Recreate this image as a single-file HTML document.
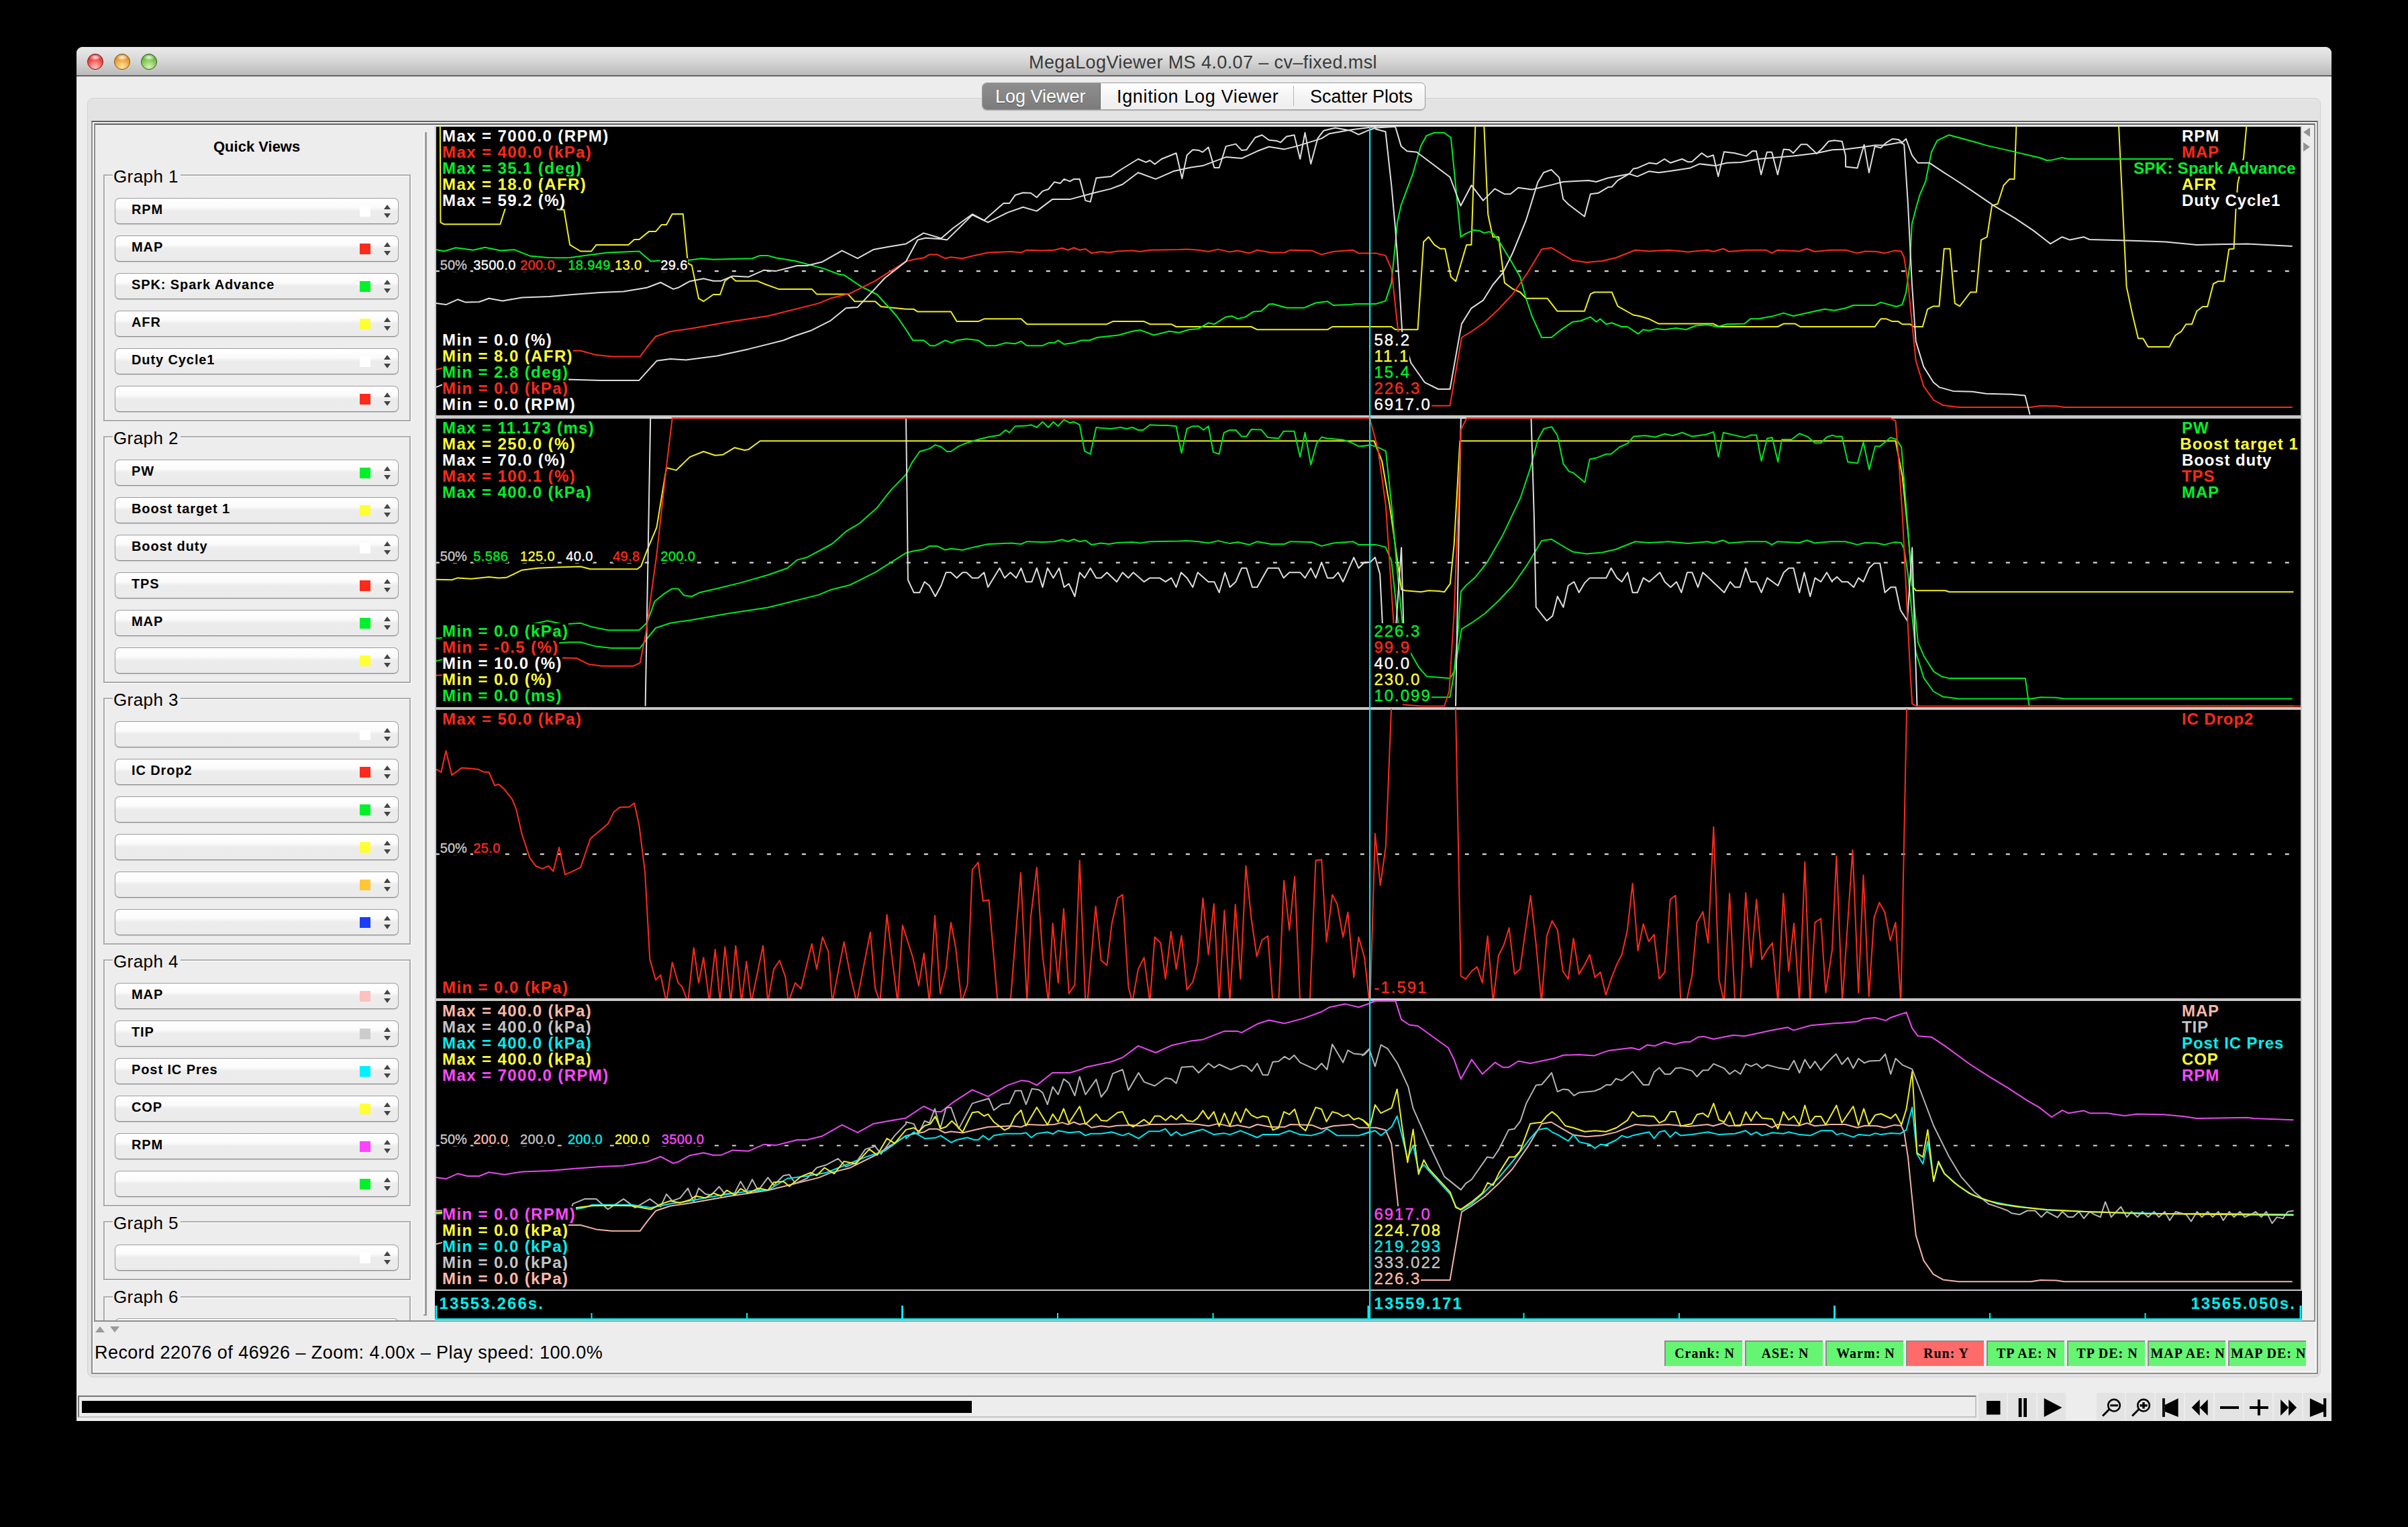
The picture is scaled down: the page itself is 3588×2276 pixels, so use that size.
<!DOCTYPE html><html><head><meta charset="utf-8"><style>
*{margin:0;padding:0;box-sizing:border-box}
html,body{width:3588px;height:2276px;background:#000;overflow:hidden;font-family:"Liberation Sans", sans-serif}
.a{position:absolute}
.t{position:absolute;white-space:pre;line-height:1}
.combo{position:absolute;left:171px;width:423px;height:39px;border:1px solid #9c9c9c;border-bottom-color:#8a8a8a;border-radius:7px;
 background:linear-gradient(#ffffff 0%,#fbfbfb 35%,#ececec 50%,#ebebeb 100%);box-shadow:0 1px 1px rgba(0,0,0,.15)}
.combo .lbl{position:absolute;left:24px;top:6.5px;font-weight:700;font-size:20px;letter-spacing:0.9px;color:#000;white-space:pre;line-height:1}
.combo .sq{position:absolute;left:364px;top:11px;width:16px;height:16px}
.combo .up{position:absolute;left:400px;top:9px;width:0;height:0;border-left:5px solid transparent;border-right:5px solid transparent;border-bottom:7px solid #454545}
.combo .dn{position:absolute;left:400px;top:22px;width:0;height:0;border-left:5px solid transparent;border-right:5px solid transparent;border-top:7px solid #454545}
.grp{position:absolute;left:154px;width:458px;border:2px solid #a9a9a9;border-top-color:#b0b0b0;box-shadow:inset 1px 1px 0 #fff,1px 1px 0 #fff}
.glbl{position:absolute;left:168px;font-size:26px;letter-spacing:0.4px;color:#000;background:#ededed;padding:0 3px 0 1px;white-space:pre;line-height:1}
.ind{position:absolute;top:1998px;width:116px;height:38px;border-top:2px solid #8c8c8c;border-left:2px solid #8c8c8c;font-family:"Liberation Serif", serif;font-weight:700;font-size:20px;letter-spacing:1px;color:#000;display:flex;justify-content:safe center;padding-left:2px;line-height:34px;white-space:pre;overflow:hidden}
.btn{position:absolute;top:2076px;width:42px;height:41px;background:#e3e3e3}
.ct{position:absolute;white-space:pre;line-height:1;font-weight:700;font-size:24px;letter-spacing:1.3px}
.mid{position:absolute;white-space:pre;line-height:1;font-size:20px}
</style></head><body>
<div class="a" style="left:114px;top:70px;width:3360px;height:2048px;background:#ededed;border-radius:9px 9px 0 0;overflow:hidden">
<div class="a" style="left:0;top:0;width:3360px;height:42px;background:linear-gradient(#eaeaea,#d6d6d6 50%,#bababa)"></div>
<div class="a" style="left:0;top:42px;width:3360px;height:2px;background:#636363"></div>
</div>
<div class="a" style="left:130px;top:80px;width:24px;height:24px;border-radius:50%;background:radial-gradient(ellipse 40% 22% at 50% 20%,rgba(255,255,255,.9),rgba(255,255,255,0)),radial-gradient(circle at 50% 85%,#fbc8c4 0%,#f4504c 50%,#c42622 92%);border:1px solid #7a1512"></div>
<div class="a" style="left:170px;top:80px;width:24px;height:24px;border-radius:50%;background:radial-gradient(ellipse 40% 22% at 50% 20%,rgba(255,255,255,.9),rgba(255,255,255,0)),radial-gradient(circle at 50% 85%,#fde7a8 0%,#f0a640 50%,#c87a18 92%);border:1px solid #7d5410"></div>
<div class="a" style="left:210px;top:80px;width:24px;height:24px;border-radius:50%;background:radial-gradient(ellipse 40% 22% at 50% 20%,rgba(255,255,255,.9),rgba(255,255,255,0)),radial-gradient(circle at 50% 85%,#d8f0b8 0%,#86c858 50%,#4a9a2a 92%);border:1px solid #2d5e17"></div>
<div class="t" style="left:1533px;top:80px;font-size:27px;letter-spacing:0.4px;color:#3a3a3a">MegaLogViewer MS 4.0.07 – cv–fixed.msl</div>
<div class="a" style="left:130px;top:146px;width:3328px;height:1907px;background:#e3e3e3;border:1px solid #d0d0d0;border-radius:9px"></div>
<div class="a" style="left:136px;top:180px;width:3318px;height:1868px;background:#ededed;border:2px solid #8d8d8d;border-top-color:#5f5f5f"></div>
<div class="a" style="left:138px;top:182px;width:3314px;height:1864px;border:2px solid #f7f7f7"></div>
<div class="a" style="left:140px;top:184px;width:3310px;height:1786px;border:2px solid #8d8d8d;border-top-color:#5f5f5f"></div>
<div class="a" style="left:1463px;top:123px;width:661px;height:40.5px;border:1px solid #9b9b9b;border-radius:7px;background:linear-gradient(#ffffff,#f4f4f4 50%,#eeeeee);box-shadow:0 1px 1px rgba(0,0,0,.2);overflow:hidden">
<div class="a" style="left:0;top:0;width:176px;height:40px;background:linear-gradient(#8e8e8e,#858585 50%,#7a7a7a);border-right:1px solid #666"></div>
<div class="a" style="left:463px;top:4px;width:1px;height:30px;background:#b5b5b5"></div>
</div>
<div class="t" style="left:1483px;top:131px;font-size:27px;color:#fff;text-shadow:0 1px 0 #555">Log Viewer</div>
<div class="t" style="left:1664px;top:131px;font-size:27px;letter-spacing:0.65px;color:#000">Ignition Log Viewer</div>
<div class="t" style="left:1952px;top:131px;font-size:27px;color:#000">Scatter Plots</div>
<div class="t" style="left:318px;top:207.5px;font-size:22px;font-weight:700;color:#000">Quick Views</div>
<div class="a" style="left:142px;top:186px;width:490px;height:1782px;overflow:hidden">
<div class="grp" style="left:12px;top:74.0px;height:367.5px"></div>
<div class="glbl" style="left:26px;top:64.0px">Graph 1</div>
<div class="combo" style="left:29px;top:108.5px"><div class="lbl">RPM</div><div class="sq" style="background:#ffffff"></div><div class="up"></div><div class="dn"></div></div>
<div class="combo" style="left:29px;top:164.5px"><div class="lbl">MAP</div><div class="sq" style="background:#ff2a1a"></div><div class="up"></div><div class="dn"></div></div>
<div class="combo" style="left:29px;top:220.5px"><div class="lbl">SPK: Spark Advance</div><div class="sq" style="background:#00f02a"></div><div class="up"></div><div class="dn"></div></div>
<div class="combo" style="left:29px;top:276.5px"><div class="lbl">AFR</div><div class="sq" style="background:#ffff33"></div><div class="up"></div><div class="dn"></div></div>
<div class="combo" style="left:29px;top:332.5px"><div class="lbl">Duty Cycle1</div><div class="sq" style="background:#ffffff"></div><div class="up"></div><div class="dn"></div></div>
<div class="combo" style="left:29px;top:388.5px"><div class="lbl"></div><div class="sq" style="background:#ff2a1a"></div><div class="up"></div><div class="dn"></div></div>
<div class="grp" style="left:12px;top:464.0px;height:367.5px"></div>
<div class="glbl" style="left:26px;top:454.0px">Graph 2</div>
<div class="combo" style="left:29px;top:498.5px"><div class="lbl">PW</div><div class="sq" style="background:#00f02a"></div><div class="up"></div><div class="dn"></div></div>
<div class="combo" style="left:29px;top:554.5px"><div class="lbl">Boost target 1</div><div class="sq" style="background:#ffff33"></div><div class="up"></div><div class="dn"></div></div>
<div class="combo" style="left:29px;top:610.5px"><div class="lbl">Boost duty</div><div class="sq" style="background:#ffffff"></div><div class="up"></div><div class="dn"></div></div>
<div class="combo" style="left:29px;top:666.5px"><div class="lbl">TPS</div><div class="sq" style="background:#ff2a1a"></div><div class="up"></div><div class="dn"></div></div>
<div class="combo" style="left:29px;top:722.5px"><div class="lbl">MAP</div><div class="sq" style="background:#00f02a"></div><div class="up"></div><div class="dn"></div></div>
<div class="combo" style="left:29px;top:778.5px"><div class="lbl"></div><div class="sq" style="background:#ffff33"></div><div class="up"></div><div class="dn"></div></div>
<div class="grp" style="left:12px;top:854.0px;height:367.5px"></div>
<div class="glbl" style="left:26px;top:844.0px">Graph 3</div>
<div class="combo" style="left:29px;top:888.5px"><div class="lbl"></div><div class="sq" style="background:#ffffff"></div><div class="up"></div><div class="dn"></div></div>
<div class="combo" style="left:29px;top:944.5px"><div class="lbl">IC Drop2</div><div class="sq" style="background:#ff2a1a"></div><div class="up"></div><div class="dn"></div></div>
<div class="combo" style="left:29px;top:1000.5px"><div class="lbl"></div><div class="sq" style="background:#00f02a"></div><div class="up"></div><div class="dn"></div></div>
<div class="combo" style="left:29px;top:1056.5px"><div class="lbl"></div><div class="sq" style="background:#ffff33"></div><div class="up"></div><div class="dn"></div></div>
<div class="combo" style="left:29px;top:1112.5px"><div class="lbl"></div><div class="sq" style="background:#ffc833"></div><div class="up"></div><div class="dn"></div></div>
<div class="combo" style="left:29px;top:1168.5px"><div class="lbl"></div><div class="sq" style="background:#1a3cff"></div><div class="up"></div><div class="dn"></div></div>
<div class="grp" style="left:12px;top:1244.0px;height:367.5px"></div>
<div class="glbl" style="left:26px;top:1234.0px">Graph 4</div>
<div class="combo" style="left:29px;top:1278.5px"><div class="lbl">MAP</div><div class="sq" style="background:#ffc0c0"></div><div class="up"></div><div class="dn"></div></div>
<div class="combo" style="left:29px;top:1334.5px"><div class="lbl">TIP</div><div class="sq" style="background:#cccccc"></div><div class="up"></div><div class="dn"></div></div>
<div class="combo" style="left:29px;top:1390.5px"><div class="lbl">Post IC Pres</div><div class="sq" style="background:#00f0ff"></div><div class="up"></div><div class="dn"></div></div>
<div class="combo" style="left:29px;top:1446.5px"><div class="lbl">COP</div><div class="sq" style="background:#ffff33"></div><div class="up"></div><div class="dn"></div></div>
<div class="combo" style="left:29px;top:1502.5px"><div class="lbl">RPM</div><div class="sq" style="background:#ff44ff"></div><div class="up"></div><div class="dn"></div></div>
<div class="combo" style="left:29px;top:1558.5px"><div class="lbl"></div><div class="sq" style="background:#00f02a"></div><div class="up"></div><div class="dn"></div></div>
<div class="grp" style="left:12px;top:1634.0px;height:87.5px"></div>
<div class="glbl" style="left:26px;top:1624.0px">Graph 5</div>
<div class="combo" style="left:29px;top:1668.5px"><div class="lbl"></div><div class="sq" style="background:#ffffff"></div><div class="up"></div><div class="dn"></div></div>
<div class="grp" style="left:12px;top:1745.5px;height:200px"></div>
<div class="glbl" style="left:26px;top:1734.0px">Graph 6</div>
<div class="combo" style="left:29px;top:1778.5px"></div>
</div>
<div class="a" style="left:631px;top:197px;width:2px;height:1762px;background:#fafafa"></div>
<div class="a" style="left:633px;top:197px;width:3px;height:1764px;background:#9a9a9a"></div>
<div class="a" style="left:631px;top:1959px;width:5px;height:2px;background:#9a9a9a"></div>
<div class="a" style="left:142px;top:1977px;width:0;height:0;border-left:7px solid transparent;border-right:7px solid transparent;border-bottom:9px solid #9a9a9a"></div>
<div class="a" style="left:164px;top:1977px;width:0;height:0;border-left:7px solid transparent;border-right:7px solid transparent;border-top:9px solid #9a9a9a"></div>
<div class="a" style="left:3432px;top:190px;width:0;height:0;border-top:7px solid transparent;border-bottom:7px solid transparent;border-right:10px solid #939393"></div>
<div class="a" style="left:3432px;top:212px;width:0;height:0;border-top:7px solid transparent;border-bottom:7px solid transparent;border-left:10px solid #939393"></div>
<div class="a" style="left:648px;top:188px;width:2782px;height:1781px;background:#c8c8c8"></div>
<div class="a" style="left:650px;top:189px;width:2778px;height:430px;background:#000"></div>
<div class="a" style="left:650px;top:623.5px;width:2778px;height:430px;background:#000"></div>
<div class="a" style="left:650px;top:1058px;width:2778px;height:430px;background:#000"></div>
<div class="a" style="left:650px;top:1492.3px;width:2778px;height:430px;background:#000"></div>
<div class="a" style="left:648px;top:1924px;width:2782px;height:44px;background:#000"></div>
<div class="a" style="left:648px;top:1965px;width:2782px;height:3px;background:#00f0f0"></div>
<div class="t" style="left:141px;top:2003px;font-size:27px;letter-spacing:0.44px;color:#000">Record 22076 of 46926 – Zoom: 4.00x – Play speed: 100.0%</div>
<div class="ind" style="left:2480px;background:#66f573">Crank: N</div>
<div class="ind" style="left:2600px;background:#66f573">ASE: N</div>
<div class="ind" style="left:2720px;background:#66f573">Warm: N</div>
<div class="ind" style="left:2840px;background:#ff6a6a">Run: Y</div>
<div class="ind" style="left:2960px;background:#66f573">TP AE: N</div>
<div class="ind" style="left:3080px;background:#66f573">TP DE: N</div>
<div class="ind" style="left:3200px;background:#66f573">MAP AE: N</div>
<div class="ind" style="left:3320px;background:#66f573">MAP DE: N</div>
<div class="a" style="left:116px;top:2080px;width:2829px;height:33px;background:#ededed;border:2px solid #c4c4c4;border-top-color:#767676;border-left-color:#767676"></div>
<div class="a" style="left:122px;top:2088px;width:1326px;height:18px;background:#000"></div>
<div class="btn" style="left:2948px"></div>
<div class="btn" style="left:2992px"></div>
<div class="btn" style="left:3036px"></div>
<div class="btn" style="left:3124px"></div>
<div class="btn" style="left:3168px"></div>
<div class="btn" style="left:3212px"></div>
<div class="btn" style="left:3256px"></div>
<div class="btn" style="left:3300px"></div>
<div class="btn" style="left:3344px"></div>
<div class="btn" style="left:3388px"></div>
<div class="btn" style="left:3432px"></div>
<svg class="a" style="left:0;top:0" width="3588" height="2276" fill="#000"><rect x="2960" y="2088" width="20.5" height="20.5"/><rect x="3007.7" y="2084" width="4.8" height="28"/><rect x="3015.2" y="2084" width="4.8" height="28"/><polygon points="3045.7,2084 3072.5,2098 3045.7,2112"/><circle cx="3150" cy="2094.7" r="8.8" fill="none" stroke="#000" stroke-width="2.6"/><rect x="3144.3" y="2093.3" width="11.6" height="3"/><line x1="3133" y1="2110.5" x2="3143.5" y2="2100" stroke="#000" stroke-width="3"/><circle cx="3194" cy="2094.7" r="8.8" fill="none" stroke="#000" stroke-width="2.6"/><rect x="3188.4" y="2093.2" width="11.2" height="3.4"/><rect x="3192.3" y="2090" width="3.4" height="9.6"/><line x1="3177" y1="2110.5" x2="3187.5" y2="2100" stroke="#000" stroke-width="3"/><rect x="3222" y="2084.2" width="3.8" height="27.7"/><polygon points="3225.8,2094.1 3245.6,2084.2 3245.6,2111.9 3225.8,2103.9"/><polygon points="3265.7,2098 3277.7,2086 3277.7,2110"/><polygon points="3277.7,2098 3289.7,2086 3289.7,2110"/><rect x="3308" y="2096" width="28" height="4"/><rect x="3352" y="2096" width="27.8" height="4"/><rect x="3363.9" y="2086" width="4" height="23.6"/><polygon points="3398.1,2086 3410.1,2098 3398.1,2110"/><polygon points="3410.1,2086 3422.1,2098 3410.1,2110"/><polygon points="3441.9,2084.2 3462.2,2094.1 3462.2,2103.9 3441.9,2111.9"/><rect x="3462" y="2084.2" width="4.2" height="27.7"/></svg>
<svg class="a" style="left:0;top:0" width="3588" height="2276" viewBox="0 0 3588 2276">
<defs>
<clipPath id="cp0"><rect x="650" y="187.5" width="2778" height="431.5"/></clipPath>
<clipPath id="cp1"><rect x="650" y="622.0" width="2778" height="431.5"/></clipPath>
<clipPath id="cp2"><rect x="650" y="1056.5" width="2778" height="431.5"/></clipPath>
<clipPath id="cp3"><rect x="650" y="1490.8" width="2778" height="431.5"/></clipPath>
</defs>
<g clip-path="url(#cp0)">
<line x1="648.8" y1="404.2" x2="3411" y2="404.2" stroke="#d8d8d8" stroke-width="2.2" stroke-dasharray="6 20"/>
<polyline fill="none" stroke="#eeee22" stroke-width="2.0" stroke-linejoin="round" points="655.8,187.5 656.4,331.4 661.6,334.3 745.3,334.3 753.2,309.6 760.5,305.3 824.4,305.3 831.7,312.5 840.4,312.5 849.1,364.9 865.1,374.5 881.1,374.5 888.4,364.9 936.3,364.9 945.1,357.0 952.3,357.0 966.9,345.1 977.0,345.1 985.8,334.9 993.0,334.9 1001.7,318.9 1017.7,318.9 1025.0,392.5 1030.8,395.4 1041.0,444.8 1048.3,449.2 1062.8,439.0 1073.0,439.0 1080.2,418.7 1089.0,412.3 1096.2,418.7 1128.2,418.7 1138.4,423.0 1160.2,430.9 1209.6,430.9 1216.9,438.4 1263.4,438.4 1273.5,449.2 1304.1,449.2 1312.8,457.0 1350.0,460.8 1361.6,460.8 1367.4,464.6 1416.9,464.6 1425.6,479.1 1457.6,479.1 1466.3,475.3 1521.5,475.3 1530.2,483.2 1649.4,483.2 1658.1,479.1 1704.7,479.1 1713.4,483.2 1745.3,483.2 1752.6,487.0 1864.5,487.0 1873.3,491.3 1977.9,491.3 1985.2,487.0 2050.0,487.0 2073.3,487.0 2079.1,491.3 2112.5,491.3 2121.2,360.5 2128.5,353.2 2137.2,364.9 2145.9,370.7 2153.2,370.7 2161.9,412.8 2169.2,419.2 2185.2,364.9 2192.4,364.9 2198.3,187.5 2205.5,186.1 2211.3,187.5 2217.2,319.8 2224.4,353.2 2233.1,353.2 2241.9,421.6 2253.5,430.3 2265.1,435.5 2273.8,444.8 2305.8,444.8 2320.3,463.7 2361.0,463.7 2369.8,438.4 2375.6,435.5 2401.7,435.5 2410.5,456.4 2433.7,469.5 2442.4,471.0 2457.0,475.3 2471.5,482.6 2552.9,482.6 2561.6,487.0 2648.8,487.0 2657.6,482.6 2675.0,482.6 2682.3,487.0 2750.0,487.0 2793.6,487.0 2802.3,475.3 2811.0,475.3 2819.8,479.1 2828.5,479.1 2834.3,483.2 2845.9,483.2 2851.7,487.0 2864.8,487.0 2872.1,460.8 2880.8,456.4 2889.5,456.4 2896.8,370.7 2905.5,370.7 2912.8,452.1 2920.1,456.4 2936.0,435.5 2944.8,435.5 2952.0,357.6 2960.8,353.2 2968.0,306.7 2976.7,303.8 2985.5,276.2 2994.2,266.9 3001.5,266.9 3004.4,187.5 3005.8,186.1 3155.5,186.1 3157.0,187.5 3168.6,427.4 3177.3,468.1 3186.0,504.4 3193.3,504.4 3200.6,516.9 3232.6,516.9 3241.3,500.0 3250.0,494.2 3257.3,483.2 3266.0,483.2 3273.3,463.7 3282.0,457.0 3289.2,457.0 3298.0,423.0 3305.2,419.2 3314.0,419.2 3321.2,371.6 3328.5,370.7 3331.4,314.0 3334.3,273.3 3343.0,235.5 3347.4,187.5 3348.8,186.1"/>
<polyline fill="none" stroke="#00ee22" stroke-width="2.0" stroke-linejoin="round" points="650.0,372.1 661.6,374.5 679.1,369.2 705.2,372.7 722.7,368.7 745.9,373.6 766.3,372.1 789.5,381.4 818.6,384.3 847.7,384.3 870.9,380.9 905.8,376.5 952.3,374.5 969.8,389.6 987.2,388.1 1025.0,388.1 1045.3,385.2 1062.8,386.7 1120.9,385.2 1132.6,380.9 1144.2,380.9 1155.8,384.3 1184.9,389.0 1228.5,400.6 1248.8,408.5 1257.6,409.9 1283.7,427.4 1307.0,439.0 1336.0,471.0 1350.0,491.3 1360.2,507.3 1376.2,507.3 1386.3,515.2 1393.6,515.2 1408.1,507.3 1418.3,511.1 1425.6,507.3 1440.1,505.3 1457.6,507.3 1469.2,515.2 1483.7,515.2 1498.3,511.1 1512.8,512.3 1521.5,508.8 1530.2,515.2 1553.5,515.2 1562.2,511.1 1570.9,511.1 1576.7,507.3 1585.5,513.1 1600.0,511.1 1611.6,507.3 1623.3,507.3 1634.9,503.0 1666.9,499.5 1687.2,493.7 1698.8,491.9 1719.2,499.5 1742.4,493.7 1757.0,495.7 1771.5,491.3 1786.0,489.9 1800.6,481.2 1809.3,483.2 1826.7,472.4 1835.5,471.0 1844.2,475.3 1855.8,472.4 1867.4,464.6 1879.1,463.7 1890.7,453.5 1896.5,453.0 1916.9,458.8 1943.0,458.8 1960.5,451.5 1977.9,449.2 1986.6,455.0 2012.8,454.1 2018.6,453.0 2050.0,453.0 2064.5,448.6 2073.3,421.6 2079.1,363.4 2082.0,331.4 2087.8,305.3 2105.2,258.8 2116.9,218.1 2125.6,202.1 2137.2,197.7 2151.7,197.7 2161.9,205.0 2176.5,353.2 2183.7,348.3 2195.3,343.1 2204.1,343.7 2211.3,347.4 2218.6,345.4 2224.4,347.4 2236.0,363.4 2253.5,392.5 2265.1,412.8 2273.8,444.8 2282.6,471.0 2297.1,503.0 2311.6,503.0 2326.2,491.3 2343.6,479.7 2355.2,478.2 2369.8,472.4 2378.5,479.7 2384.3,475.3 2393.0,483.2 2401.7,481.2 2416.3,487.0 2425.0,487.0 2441.0,497.7 2448.3,491.3 2457.0,492.8 2468.6,489.9 2480.2,491.3 2497.7,489.0 2512.2,491.3 2526.7,485.5 2544.2,484.1 2558.7,487.0 2573.3,483.2 2599.4,482.6 2608.1,475.3 2619.8,475.3 2640.1,471.6 2657.6,466.6 2672.1,471.0 2692.4,466.6 2718.6,460.8 2733.1,462.8 2750.0,459.3 2761.6,455.0 2793.6,455.0 2802.3,450.6 2825.6,457.0 2834.3,454.1 2840.1,436.1 2845.9,392.5 2848.8,334.3 2854.7,311.1 2860.5,290.7 2869.2,270.4 2877.9,226.8 2886.6,209.3 2904.1,201.2 2944.8,212.3 2959.3,216.6 2991.3,223.9 3040.7,235.5 3049.4,239.0 3058.1,238.4 3072.7,234.9 3081.4,237.0 3238.4,237.0"/>
<polyline fill="none" stroke="#ff2a1a" stroke-width="2.0" stroke-linejoin="round" points="650.0,550.9 667.4,546.6 766.3,529.1 847.7,522.7 865.1,522.7 888.4,529.1 911.6,531.4 953.8,531.4 964.0,517.5 977.0,501.5 998.8,494.2 1027.9,489.9 1086.0,479.7 1144.2,471.0 1219.8,452.1 1237.2,444.8 1266.3,437.5 1304.1,418.7 1350.0,389.6 1361.6,386.7 1376.2,384.3 1384.9,379.4 1396.5,379.4 1408.1,385.2 1416.9,383.2 1434.3,385.2 1451.7,380.9 1472.1,376.5 1507.0,375.0 1521.5,376.5 1530.2,372.7 1553.5,373.6 1570.9,372.7 1582.6,369.8 1591.3,372.7 1600.0,369.2 1608.7,372.7 1617.4,371.0 1626.2,377.4 1640.7,375.0 1652.3,376.5 1664.0,374.5 1687.2,373.6 1698.8,375.0 1713.4,372.7 1757.0,372.1 1768.6,371.6 1786.0,372.7 1800.6,375.0 1815.1,371.6 1832.6,375.6 1844.2,373.6 1861.6,377.4 1873.3,372.7 1893.6,376.5 1914.0,376.5 1922.7,372.7 1954.7,373.6 1969.2,379.4 1986.6,375.0 2015.7,372.7 2024.4,377.4 2050.0,377.4 2064.5,380.9 2073.3,401.2 2083.4,495.7 2096.5,604.7 2160.5,604.7 2177.9,503.0 2192.4,494.2 2212.8,479.7 2233.1,460.8 2253.5,439.0 2276.7,405.6 2297.1,371.6 2311.6,369.2 2326.2,378.0 2343.6,388.1 2364.0,391.0 2387.2,389.0 2407.6,384.3 2436.6,372.7 2457.0,374.5 2486.0,372.7 2515.1,375.6 2544.2,372.7 2552.9,375.0 2567.4,370.7 2576.2,375.0 2602.3,372.7 2631.4,372.7 2640.1,377.4 2648.8,372.7 2680.8,374.5 2692.4,370.7 2704.1,375.0 2727.3,372.7 2750.0,372.7 2767.4,377.4 2779.1,374.5 2796.5,375.0 2808.1,377.4 2822.7,373.6 2832.8,374.5 2837.2,383.8 2843.0,421.6 2848.8,479.7 2854.7,537.8 2866.3,575.6 2880.8,596.0 2895.3,604.1 2918.6,607.0 3026.2,607.0 3040.7,604.7 3064.0,605.3 3075.6,607.0 3415.7,607.0"/>
<polyline fill="none" stroke="#dedede" stroke-width="2.0" stroke-linejoin="round" points="650.0,577.1 667.4,569.8 766.3,566.9 843.3,565.5 894.2,566.9 952.3,566.9 964.0,553.8 978.5,537.8 998.8,534.9 1022.1,536.4 1068.6,530.6 1115.1,520.4 1167.4,507.3 1182.0,501.5 1208.1,492.8 1237.2,478.2 1260.5,459.3 1277.9,457.9 1298.3,436.1 1318.6,414.3 1350.0,389.6 1367.4,357.6 1379.1,354.7 1402.3,356.2 1411.0,357.6 1448.8,320.4 1472.1,331.4 1501.2,316.9 1524.4,308.8 1544.8,314.6 1568.0,297.1 1594.2,297.1 1629.1,287.8 1655.2,281.4 1672.7,274.8 1695.9,257.3 1722.1,266.9 1748.3,255.3 1774.4,249.5 1791.9,247.1 1826.7,234.1 1850.0,236.1 1873.3,225.3 1890.7,218.7 1914.0,222.4 1931.4,218.1 1969.2,206.4 1980.8,199.2 2012.8,193.4 2050.0,188.8 2050.0,192.5 2064.5,196.3 2073.3,276.2 2079.1,340.2 2084.9,421.6 2089.2,494.2 2102.3,540.7 2122.7,569.8 2143.0,580.0 2160.5,580.0 2172.1,514.6 2177.9,482.6 2192.4,459.3 2209.9,447.7 2224.4,424.5 2239.0,407.0 2253.5,378.0 2273.8,328.5 2291.3,271.8 2300.0,257.3 2311.6,253.0 2323.3,264.6 2329.1,296.6 2337.8,305.3 2361.0,322.7 2369.8,289.3 2381.4,287.8 2395.9,279.1 2401.7,278.5 2410.5,268.9 2427.9,258.8 2433.7,251.5 2439.5,250.6 2457.0,242.8 2468.6,244.2 2480.2,237.0 2489.0,242.8 2506.4,237.0 2515.1,241.3 2520.9,241.3 2535.5,228.2 2544.2,234.1 2552.9,231.2 2560.2,263.1 2568.9,226.2 2584.9,228.2 2602.3,232.6 2611.0,225.3 2616.9,225.3 2624.1,260.2 2632.8,226.8 2640.1,226.8 2648.8,260.2 2657.6,222.4 2666.3,223.3 2672.1,228.2 2683.7,215.2 2692.4,215.2 2707.0,229.1 2715.7,221.0 2724.4,210.8 2733.1,209.3 2744.8,210.8 2750.0,232.6 2750.0,248.6 2767.4,250.6 2777.6,215.7 2784.9,257.3 2793.6,218.1 2802.3,220.4 2811.0,212.3 2819.8,207.0 2828.5,207.9 2834.3,212.3 2840.1,207.0 2848.8,231.2 2857.6,242.8 2875.0,242.8 2895.3,256.4 2912.8,267.5 2939.0,284.9 2970.9,306.7 3002.9,325.6 3029.1,343.1 3055.2,363.4 3072.7,353.2 3084.3,357.6 3104.7,353.2 3113.4,357.0 3186.0,359.1 3226.7,360.5 3273.3,364.9 3348.8,363.4 3415.7,366.9"/>
<polyline fill="none" stroke="#dedede" stroke-width="2.0" stroke-linejoin="round" points="650.0,452.1 664.5,454.1 682.0,446.3 693.6,450.6 714.0,450.0 728.5,444.8 748.8,448.6 777.9,443.4 818.6,441.9 853.5,439.0 894.2,436.1 929.1,434.6 964.0,428.8 984.3,421.0 1003.2,430.9 1010.5,428.8 1027.9,419.2 1048.3,415.2 1062.8,418.7 1074.4,418.7 1091.9,411.4 1115.1,412.8 1138.4,402.7 1155.8,404.1 1173.3,399.8 1187.8,396.0 1202.3,396.0 1225.6,390.2 1254.7,373.6 1277.9,385.2 1301.2,372.1 1324.4,367.8 1350.0,363.4 1376.2,347.4 1402.3,355.3 1419.8,340.2 1448.8,319.2 1466.3,328.5 1495.3,303.0 1504.1,303.0 1512.8,290.7 1524.4,287.3 1536.0,287.8 1544.8,294.2 1553.5,284.9 1562.2,282.0 1570.9,271.3 1579.7,273.3 1585.5,266.9 1594.2,270.4 1600.0,266.9 1608.7,266.9 1617.4,298.9 1624.7,300.9 1633.4,265.2 1655.2,263.1 1669.8,253.0 1695.9,237.0 1707.6,241.9 1713.4,239.0 1720.6,244.8 1730.8,237.0 1752.6,228.2 1761.3,266.0 1768.6,231.2 1777.3,223.3 1786.0,223.9 1791.9,226.8 1800.6,219.5 1809.3,250.0 1816.6,250.0 1826.7,218.1 1841.3,214.6 1850.0,223.9 1857.3,223.3 1870.3,205.0 1880.5,201.2 1890.7,208.8 1902.3,209.9 1908.1,212.3 1916.9,203.5 1928.5,201.2 1937.2,237.0 1944.5,197.7 1953.2,244.2 1963.4,206.4 1972.1,194.8 1989.5,190.5 2012.8,194.8 2024.4,200.6 2039.0,194.2 2050.0,190.5 2079.1,188.8 2087.8,218.1 2096.5,225.3 2111.0,226.8 2160.5,264.0 2176.5,306.7 2192.4,276.2 2209.9,298.9 2227.3,281.4 2241.9,289.3 2250.6,289.3 2262.2,279.7 2282.6,282.6 2311.6,275.6 2329.1,271.0 2366.9,268.9 2378.5,271.0 2395.9,265.2 2427.9,259.3 2439.5,263.1 2457.0,255.3 2471.5,257.3 2491.9,254.4 2518.0,250.6 2532.6,244.2 2555.8,247.1 2573.3,242.8 2593.6,241.9 2619.8,237.0 2672.1,232.6 2707.0,228.2 2730.2,223.3 2750.0,222.4 2773.3,219.5 2793.6,216.6 2808.1,216.6 2831.4,212.3 2837.2,215.2 2843.0,305.3 2848.8,421.6 2854.7,508.8 2866.3,546.6 2880.8,569.8 2889.5,577.1 2909.9,582.9 2939.0,583.8 2959.3,586.7 2997.1,587.8 3017.4,589.6 3024.7,618.0"/>
</g>
<g clip-path="url(#cp1)">
<line x1="648.8" y1="838.7" x2="3411" y2="838.7" stroke="#d8d8d8" stroke-width="2.2" stroke-dasharray="6 20"/>
<polyline fill="none" stroke="#00e622" stroke-width="2.0" stroke-linejoin="round" points="650.0,985.4 667.4,981.1 766.3,963.6 847.7,957.2 865.1,957.2 888.4,963.6 911.6,965.9 953.8,965.9 964.0,952.0 977.0,936.0 998.8,928.7 1027.9,924.4 1086.0,914.2 1144.2,905.5 1219.8,886.6 1237.2,879.3 1266.3,872.0 1304.1,853.2 1350.0,824.1 1361.6,821.2 1376.2,818.8 1384.9,813.9 1396.5,813.9 1408.1,819.7 1416.9,817.7 1434.3,819.7 1451.7,815.4 1472.1,811.0 1507.0,809.5 1521.5,811.0 1530.2,807.2 1553.5,808.1 1570.9,807.2 1582.6,804.3 1591.3,807.2 1600.0,803.7 1608.7,807.2 1617.4,805.5 1626.2,811.9 1640.7,809.5 1652.3,811.0 1664.0,809.0 1687.2,808.1 1698.8,809.5 1713.4,807.2 1757.0,806.6 1768.6,806.1 1786.0,807.2 1800.6,809.5 1815.1,806.1 1832.6,810.1 1844.2,808.1 1861.6,811.9 1873.3,807.2 1893.6,811.0 1914.0,811.0 1922.7,807.2 1954.7,808.1 1969.2,813.9 1986.6,809.5 2015.7,807.2 2024.4,811.9 2050.0,811.9 2064.5,815.4 2073.3,835.7 2083.4,930.2 2096.5,1039.2 2160.5,1039.2 2177.9,937.5 2192.4,928.7 2212.8,914.2 2233.1,895.3 2253.5,873.5 2276.7,840.1 2297.1,806.1 2311.6,803.7 2326.2,812.5 2343.6,822.6 2364.0,825.5 2387.2,823.5 2407.6,818.8 2436.6,807.2 2457.0,809.0 2486.0,807.2 2515.1,810.1 2544.2,807.2 2552.9,809.5 2567.4,805.2 2576.2,809.5 2602.3,807.2 2631.4,807.2 2640.1,811.9 2648.8,807.2 2680.8,809.0 2692.4,805.2 2704.1,809.5 2727.3,807.2 2750.0,807.2 2767.4,811.9 2779.1,809.0 2796.5,809.5 2808.1,811.9 2822.7,808.1 2832.8,809.0 2837.2,818.3 2843.0,856.1 2848.8,914.2 2854.7,972.3 2866.3,1010.1 2880.8,1030.5 2895.3,1038.6 2918.6,1041.5 3026.2,1041.5 3040.7,1039.2 3064.0,1039.8 3075.6,1041.5 3415.7,1041.5"/>
<polyline fill="none" stroke="#eeee22" stroke-width="2.0" stroke-linejoin="round" points="650.0,863.7 673.3,864.3 682.0,861.4 702.3,862.8 728.5,859.9 743.0,861.4 754.7,860.8 777.9,849.7 801.2,846.8 830.2,845.4 865.1,844.5 879.7,848.3 949.4,848.3 955.2,843.9 964.0,820.7 978.5,785.8 993.0,697.1 1007.6,700.9 1027.9,681.1 1048.3,673.0 1065.7,678.8 1077.3,677.7 1094.8,667.2 1109.3,671.0 1115.1,670.1 1132.6,657.3 1350.0,657.3 2047.4,657.3 2059.1,687.0 2070.7,753.8 2080.9,826.5 2088.1,878.8 2094.0,880.3 2117.2,882.3 2128.8,880.3 2143.4,881.1 2152.1,882.3 2160.8,870.1 2166.6,812.0 2172.4,710.2 2175.3,657.3 2730.0,657.3 2824.5,657.3 2834.7,710.2 2843.4,797.4 2849.2,873.0 2855.0,880.3 2898.6,880.3 2904.4,882.3 3417.5,882.3"/>
<polyline fill="none" stroke="#00e622" stroke-width="2.0" stroke-linejoin="round" points="650.0,951.5 737.2,942.8 815.7,925.3 839.0,930.6 865.1,928.8 882.6,934.6 905.8,939.3 952.3,939.3 964.0,928.2 975.6,896.3 990.1,884.6 1001.7,877.4 1010.5,877.4 1019.2,887.5 1030.8,889.0 1042.4,883.2 1071.5,876.5 1103.5,868.6 1144.2,857.0 1173.3,846.8 1187.8,834.6 1202.3,830.8 1240.1,810.5 1260.5,792.2 1280.8,780.0 1307.0,756.7 1327.3,730.6 1350.0,707.3 1358.7,689.9 1370.3,673.0 1384.9,668.9 1393.6,663.1 1402.3,666.0 1411.0,673.0 1416.9,673.0 1428.5,665.2 1437.2,661.4 1445.9,658.5 1457.6,655.0 1472.1,651.5 1489.5,648.6 1498.3,641.0 1504.1,644.8 1512.8,635.2 1530.2,634.6 1536.0,633.2 1544.8,637.0 1553.5,628.8 1562.2,637.0 1569.5,628.8 1576.7,635.2 1585.5,625.3 1594.2,630.3 1600.0,628.8 1608.7,633.2 1616.0,672.4 1624.7,676.8 1633.4,637.0 1640.7,638.1 1655.2,639.0 1669.8,637.0 1678.5,639.0 1687.2,637.0 1695.9,641.0 1703.2,641.0 1713.4,633.2 1727.9,634.0 1739.5,634.0 1752.6,635.2 1760.5,675.3 1768.6,639.0 1777.3,635.2 1786.0,635.2 1793.3,641.0 1800.6,635.2 1807.8,673.9 1816.6,676.8 1823.8,644.8 1832.6,641.0 1841.3,641.0 1850.0,650.6 1857.3,650.6 1864.5,639.9 1879.1,640.4 1889.2,652.1 1905.2,653.5 1912.5,642.8 1928.5,642.8 1937.2,681.1 1944.5,644.8 1953.2,692.8 1961.9,660.8 1969.2,651.5 1977.9,653.5 2001.2,655.6 2012.8,659.3 2024.4,665.2 2039.0,663.7 2030.0,665.2 2041.6,663.1 2053.3,666.6 2064.9,672.4 2073.6,753.8 2082.3,855.6 2092.5,957.3 2102.7,974.7 2114.3,995.1 2125.9,1008.2 2160.8,1011.1 2166.6,1000.9 2172.4,942.8 2176.8,881.7 2184.1,873.0 2198.6,859.9 2216.0,838.1 2239.3,797.4 2265.5,742.2 2280.0,698.6 2291.6,655.0 2300.3,639.0 2312.0,636.1 2320.7,649.2 2329.4,691.3 2338.1,702.9 2344.0,704.4 2361.4,718.9 2368.7,684.6 2378.8,682.6 2393.4,676.8 2400.6,676.8 2413.7,666.0 2425.3,660.8 2434.1,650.6 2451.5,649.2 2466.0,651.5 2480.6,646.8 2492.2,649.2 2506.7,644.8 2521.3,650.6 2541.6,647.7 2553.3,643.9 2560.5,681.1 2567.8,644.8 2599.8,652.1 2608.5,648.6 2617.2,648.6 2624.5,687.0 2633.2,653.5 2640.5,652.1 2649.2,688.4 2655.0,655.0 2669.5,655.0 2681.2,646.3 2692.8,650.6 2704.4,660.2 2713.1,660.2 2721.9,651.5 2730.0,648.6 2735.8,650.6 2744.5,650.6 2753.3,688.4 2767.8,690.4 2776.5,659.3 2785.2,700.0 2794.0,665.2 2801.2,665.2 2817.2,652.1 2825.9,655.0 2833.2,666.6 2839.0,739.3 2844.8,812.0 2850.6,884.6 2857.9,957.3 2866.6,977.7 2881.2,1000.9 2892.8,1008.2 2904.4,1011.1 3017.8,1011.1 3023.6,1052.5 3417.5,1052.5"/>
<polyline fill="none" stroke="#dedede" stroke-width="2.0" stroke-linejoin="round" points="961.6,1052.5 969.2,623.3 1350.0,623.3 1350.0,623.3 1351.5,739.3 1352.9,864.3 1361.6,883.2 1370.3,883.2 1377.6,867.2 1384.9,873.0 1393.6,889.0 1402.3,873.0 1409.6,853.2 1416.9,853.2 1425.6,861.4 1434.3,853.2 1440.1,853.2 1448.8,861.4 1457.6,861.4 1466.3,853.2 1472.1,875.3 1489.5,846.8 1496.8,861.4 1505.5,853.2 1514.2,861.4 1521.5,846.8 1528.8,867.2 1537.5,867.2 1544.8,846.8 1553.5,875.3 1560.8,846.8 1569.5,861.4 1578.2,846.8 1585.5,875.3 1592.7,870.1 1601.5,889.0 1608.7,853.2 1616.0,861.4 1624.7,846.8 1633.4,861.4 1640.7,861.4 1649.4,853.2 1664.0,867.2 1672.7,853.2 1681.4,861.4 1688.7,853.2 1704.7,867.2 1713.4,861.4 1727.9,861.4 1736.6,867.2 1745.3,861.4 1752.6,875.3 1759.9,853.2 1768.6,861.4 1777.3,875.3 1784.6,853.2 1800.6,867.2 1809.3,867.2 1816.6,883.2 1825.3,853.2 1832.6,875.3 1841.3,867.2 1850.0,846.8 1857.3,846.8 1866.0,875.3 1873.3,875.3 1889.2,846.8 1905.2,846.8 1912.5,861.4 1921.2,853.2 1937.2,853.2 1944.5,861.4 1953.2,846.8 1960.5,861.4 1969.2,838.1 1977.9,861.4 1986.6,861.4 1993.9,853.2 2001.2,867.2 2017.2,830.8 2024.4,846.8 2033.1,838.1 2040.4,838.1 2030.0,839.6 2041.6,838.1 2048.9,830.8 2056.2,855.6 2060.5,942.8"/><polyline fill="none" stroke="#dedede" stroke-width="2.0" stroke-linejoin="round" points="2079.4,942.8 2088.1,816.3 2091.6,942.8"/><polyline fill="none" stroke="#dedede" stroke-width="2.0" stroke-linejoin="round" points="2169.0,1052.5 2176.8,623.3 2281.5,623.3 2285.8,768.3 2288.7,905.0 2304.7,925.3 2313.4,918.1 2320.7,889.0 2329.4,905.0 2336.7,873.0 2345.4,867.2 2352.7,883.2 2361.4,868.6 2368.7,861.4 2393.4,861.4 2400.6,846.8 2409.4,861.4 2416.6,867.2 2425.3,853.2 2432.6,883.2 2439.9,883.2 2448.6,861.4 2457.3,867.2 2473.3,853.2 2480.6,867.2 2489.3,875.3 2498.0,867.2 2505.3,883.2 2514.0,853.2 2521.3,853.2 2530.0,875.3 2537.3,853.2 2569.2,883.2 2578.0,867.2 2585.2,875.3 2592.5,875.3 2601.2,846.8 2608.5,867.2 2617.2,867.2 2624.5,883.2 2633.2,861.4 2649.2,873.0 2657.9,853.2 2665.2,846.8 2672.4,846.8 2681.2,883.2 2688.4,853.2 2697.2,889.0 2704.4,861.4 2713.1,867.2 2721.9,853.2 2730.0,867.2 2730.0,865.7 2737.3,859.9 2744.5,867.2 2753.3,867.2 2762.0,875.3 2769.2,861.4 2776.5,867.2 2785.2,846.8 2792.5,839.6 2801.2,839.6 2808.5,883.2 2817.2,875.3 2824.5,875.3 2831.7,909.3 2841.9,925.3 2849.2,816.3 2852.1,913.7 2856.5,1052.5"/>
<polyline fill="none" stroke="#ff2a1a" stroke-width="2.0" stroke-linejoin="round" points="650.0,1006.7 737.2,1000.9 836.0,980.6 859.3,981.1 876.7,989.9 897.1,992.8 943.6,992.8 953.8,987.8 962.5,942.8 978.5,826.5 993.0,695.7 1001.7,623.3 1350.0,623.3 2041.9,623.3 2041.6,625.9 2053.3,669.5 2064.9,753.8 2073.6,884.6 2079.4,971.8 2091.0,1050.3 2117.2,1052.5 2152.1,1052.5 2159.4,1030.0 2166.6,913.7 2172.4,768.3 2176.8,640.4 2185.5,623.3 2730.0,623.3 2817.2,623.3 2824.5,627.4 2828.8,681.1 2834.7,768.3 2840.5,884.6 2846.3,1000.9 2849.2,1048.9 2855.0,1052.5 3430.0,1052.5"/>
</g>
<g clip-path="url(#cp2)">
<line x1="648.8" y1="1273.2" x2="3411" y2="1273.2" stroke="#d8d8d8" stroke-width="2.2" stroke-dasharray="6 20"/>
<polyline fill="none" stroke="#ff2a1a" stroke-width="2.0" stroke-linejoin="round" points="650.0,1146.7 657.3,1151.0 664.5,1119.0 673.3,1155.4 687.8,1144.6 699.4,1145.2 712.5,1146.7 719.8,1150.4 728.5,1151.0 737.2,1170.8 743.0,1169.0 751.7,1176.6 763.4,1191.7 769.2,1206.3 777.9,1244.0 789.5,1278.9 798.3,1290.6 808.4,1294.9 817.2,1290.6 824.4,1298.7 833.1,1262.9 841.9,1303.6 850.6,1299.9 865.1,1292.9 879.7,1249.9 905.8,1228.1 914.5,1210.6 923.3,1203.3 937.8,1202.8 945.1,1197.0 952.3,1229.5 961.0,1299.3 968.3,1430.1 977.0,1460.6 984.3,1453.3 993.0,1494.0 1001.7,1434.5 1010.5,1465.0 1016.3,1470.8 1025.0,1494.0 1033.7,1412.7 1041.0,1465.0 1048.3,1427.2 1057.0,1494.0 1065.7,1415.0 1073.0,1494.0 1080.2,1411.2 1089.0,1494.0 1096.2,1409.7 1104.9,1494.0 1112.2,1433.0 1119.5,1494.0 1136.9,1409.7 1144.2,1494.0 1152.9,1444.6 1161.6,1431.5 1170.3,1456.3 1174.7,1494.0 1184.9,1465.0 1193.6,1473.7 1209.6,1406.8 1216.9,1444.6 1225.6,1396.7 1234.3,1418.5 1240.1,1494.0 1257.6,1403.9 1266.3,1450.4 1276.5,1494.0 1296.8,1389.4 1304.1,1473.7 1311.3,1494.0 1321.5,1363.2 1330.2,1435.9 1337.5,1494.0 1344.8,1379.2 1350.0,1395.2 1360.2,1427.2 1368.9,1469.3 1376.7,1420.8 1384.9,1494.0 1393.0,1364.7 1400.9,1481.0 1409.6,1444.6 1416.9,1374.9 1424.1,1412.7 1432.8,1494.0 1441.6,1467.9 1448.8,1296.4 1457.6,1285.3 1464.8,1342.9 1473.5,1341.4 1486.6,1494.0 1505.5,1494.0 1520.9,1300.7 1530.2,1494.0 1536.0,1366.1 1544.8,1292.9 1553.5,1424.3 1562.2,1494.0 1568.6,1376.3 1576.7,1465.0 1584.9,1354.5 1592.7,1481.0 1601.5,1467.9 1608.7,1282.4 1617.4,1494.0 1620.3,1494.0 1632.6,1351.0 1640.7,1431.5 1649.4,1438.8 1656.7,1376.3 1665.4,1338.5 1672.7,1333.6 1681.4,1470.8 1687.2,1494.0 1695.9,1444.6 1704.7,1427.2 1713.4,1494.0 1720.6,1396.7 1729.4,1405.4 1736.6,1459.2 1744.8,1388.8 1752.6,1444.6 1760.5,1394.6 1768.6,1475.2 1777.3,1463.5 1784.6,1435.9 1792.4,1338.5 1800.6,1422.8 1808.7,1347.2 1816.6,1494.0 1824.4,1356.8 1832.6,1494.0 1840.7,1348.1 1848.5,1459.2 1856.4,1290.6 1864.5,1369.0 1872.7,1425.7 1880.5,1401.0 1889.2,1395.2 1896.5,1494.0 1905.2,1494.0 1913.1,1312.4 1921.2,1386.5 1929.1,1306.5 1937.2,1494.0 1951.7,1494.0 1960.5,1282.4 1969.2,1281.3 1976.5,1403.9 1985.2,1333.6 1992.4,1347.2 2001.2,1396.7 2008.4,1359.7 2017.2,1456.8 2024.4,1396.7 2033.1,1427.2 2040.4,1494.0 2041.6,1494.0 2048.9,1242.6 2056.7,1319.6 2064.9,1261.5 2073.0,1057.8 2073.6,1052.2 2168.4,1052.2 2169.0,1057.8 2172.4,1232.4 2176.8,1454.8 2184.1,1459.2 2192.8,1447.5 2200.9,1441.1 2208.8,1465.0 2216.6,1395.2 2224.8,1494.0 2232.9,1424.3 2240.8,1408.3 2248.6,1383.0 2256.7,1451.9 2264.9,1444.6 2272.7,1389.4 2280.6,1334.7 2288.7,1406.8 2296.9,1494.0 2304.7,1395.2 2312.6,1372.5 2320.7,1385.9 2328.8,1447.5 2336.7,1459.2 2344.5,1398.7 2352.7,1451.9 2360.8,1438.8 2368.7,1422.8 2376.5,1456.8 2384.7,1449.0 2392.8,1483.0 2400.6,1459.2 2408.5,1438.8 2416.6,1422.8 2424.8,1386.5 2432.6,1316.7 2440.5,1417.0 2448.6,1377.2 2456.7,1403.3 2464.6,1392.9 2472.4,1459.2 2480.6,1449.0 2488.7,1340.6 2496.6,1334.7 2504.4,1494.0 2512.6,1494.0 2521.3,1453.3 2528.5,1374.9 2537.3,1358.9 2545.1,1405.4 2553.3,1232.4 2561.4,1460.6 2569.2,1494.0 2577.1,1331.8 2585.2,1494.0 2593.4,1494.0 2601.2,1330.7 2609.1,1441.7 2617.2,1340.6 2625.3,1430.1 2633.2,1415.6 2641.0,1405.4 2649.2,1494.0 2657.3,1331.8 2665.2,1447.5 2673.0,1376.3 2681.2,1494.0 2689.3,1284.7 2697.2,1494.0 2704.4,1374.9 2713.1,1369.0 2720.4,1479.5 2730.0,1415.6 2736.4,1276.0 2745.1,1494.0 2760.5,1266.7 2769.2,1479.5 2776.5,1304.5 2784.7,1485.3 2792.5,1367.6 2800.3,1345.2 2808.5,1360.3 2816.6,1401.6 2824.5,1374.9 2832.3,1494.0 2841.0,1057.8 2841.6,1052.2"/>
</g>
<g clip-path="url(#cp3)">
<line x1="648.8" y1="1707.5" x2="3411" y2="1707.5" stroke="#d8d8d8" stroke-width="2.2" stroke-dasharray="6 20"/>
<polyline fill="none" stroke="#f0b4a8" stroke-width="2.0" stroke-linejoin="round" points="650.0,1854.2 667.4,1849.9 766.3,1832.4 847.7,1826.0 865.1,1826.0 888.4,1832.4 911.6,1834.7 953.8,1834.7 964.0,1820.8 977.0,1804.8 998.8,1797.5 1027.9,1793.2 1086.0,1783.0 1144.2,1774.3 1219.8,1755.4 1237.2,1748.1 1266.3,1740.8 1304.1,1722.0 1350.0,1692.9 1361.6,1690.0 1376.2,1687.6 1384.9,1682.7 1396.5,1682.7 1408.1,1688.5 1416.9,1686.5 1434.3,1688.5 1451.7,1684.2 1472.1,1679.8 1507.0,1678.3 1521.5,1679.8 1530.2,1676.0 1553.5,1676.9 1570.9,1676.0 1582.6,1673.1 1591.3,1676.0 1600.0,1672.5 1608.7,1676.0 1617.4,1674.3 1626.2,1680.7 1640.7,1678.3 1652.3,1679.8 1664.0,1677.8 1687.2,1676.9 1698.8,1678.3 1713.4,1676.0 1757.0,1675.4 1768.6,1674.9 1786.0,1676.0 1800.6,1678.3 1815.1,1674.9 1832.6,1678.9 1844.2,1676.9 1861.6,1680.7 1873.3,1676.0 1893.6,1679.8 1914.0,1679.8 1922.7,1676.0 1954.7,1676.9 1969.2,1682.7 1986.6,1678.3 2015.7,1676.0 2024.4,1680.7 2050.0,1680.7 2064.5,1684.2 2073.3,1704.5 2083.4,1799.0 2096.5,1908.0 2160.5,1908.0 2177.9,1806.3 2192.4,1797.5 2212.8,1783.0 2233.1,1764.1 2253.5,1742.3 2276.7,1708.9 2297.1,1674.9 2311.6,1672.5 2326.2,1681.3 2343.6,1691.4 2364.0,1694.3 2387.2,1692.3 2407.6,1687.6 2436.6,1676.0 2457.0,1677.8 2486.0,1676.0 2515.1,1678.9 2544.2,1676.0 2552.9,1678.3 2567.4,1674.0 2576.2,1678.3 2602.3,1676.0 2631.4,1676.0 2640.1,1680.7 2648.8,1676.0 2680.8,1677.8 2692.4,1674.0 2704.1,1678.3 2727.3,1676.0 2750.0,1676.0 2767.4,1680.7 2779.1,1677.8 2796.5,1678.3 2808.1,1680.7 2822.7,1676.9 2832.8,1677.8 2837.2,1687.1 2843.0,1724.9 2848.8,1783.0 2854.7,1841.1 2866.3,1878.9 2880.8,1899.3 2895.3,1907.4 2918.6,1910.3 3026.2,1910.3 3040.7,1908.0 3064.0,1908.6 3075.6,1910.3 3415.7,1910.3"/>
<polyline fill="none" stroke="#e848f0" stroke-width="2.0" stroke-linejoin="round" points="650.0,1755.1 664.5,1757.1 682.0,1749.3 696.5,1753.0 714.0,1753.0 728.5,1747.2 751.7,1750.7 777.9,1746.4 818.6,1744.9 853.5,1742.0 894.2,1739.1 929.1,1737.6 964.0,1731.8 984.3,1724.0 1003.2,1733.9 1010.5,1731.8 1027.9,1722.2 1048.3,1718.2 1062.8,1721.7 1074.4,1721.7 1091.9,1714.4 1115.1,1715.8 1138.4,1705.7 1155.8,1707.1 1173.3,1702.8 1187.8,1699.0 1202.3,1699.0 1225.6,1693.2 1254.7,1676.6 1277.9,1688.2 1301.2,1675.1 1324.4,1670.8 1350.0,1666.4 1376.2,1649.0 1393.6,1657.1 1402.3,1657.1 1419.8,1643.2 1448.8,1624.3 1472.1,1634.4 1501.2,1617.6 1521.5,1610.6 1533.1,1611.8 1544.8,1617.6 1568.0,1599.0 1594.2,1599.0 1611.6,1593.7 1617.4,1590.8 1655.2,1582.7 1672.7,1576.3 1695.9,1558.9 1722.1,1569.0 1745.3,1558.3 1774.4,1551.6 1791.9,1549.6 1823.8,1537.1 1844.2,1537.1 1850.0,1539.1 1873.3,1526.3 1890.7,1520.5 1914.0,1525.4 1943.0,1517.6 1969.2,1508.0 1980.8,1501.3 2004.1,1496.4 2024.4,1501.3 2050.0,1492.1 2041.6,1494.9 2047.4,1492.1 2079.4,1492.1 2088.1,1519.6 2099.8,1527.5 2112.8,1529.2 2157.9,1561.8 2166.6,1579.2 2176.8,1608.3 2192.8,1579.2 2208.8,1601.0 2227.7,1583.6 2239.3,1590.8 2248.0,1590.8 2262.6,1581.5 2280.0,1585.0 2317.8,1576.9 2329.4,1572.8 2352.7,1571.9 2375.9,1573.4 2396.3,1566.1 2431.2,1561.8 2442.8,1564.7 2454.4,1557.4 2466.0,1558.9 2480.6,1553.0 2495.1,1556.5 2509.7,1553.0 2518.4,1553.0 2530.0,1545.8 2538.7,1544.9 2553.3,1548.7 2582.3,1542.9 2599.8,1544.3 2640.5,1535.6 2663.7,1531.2 2672.4,1535.6 2698.6,1528.3 2730.0,1525.4 2747.4,1524.6 2767.8,1522.5 2776.5,1518.7 2794.0,1516.7 2809.9,1521.1 2817.2,1516.7 2840.5,1508.9 2849.2,1532.7 2857.9,1544.3 2878.3,1545.8 2898.6,1559.4 2933.5,1585.0 2962.6,1603.9 2991.6,1621.4 3020.7,1640.3 3038.1,1650.4 3057.0,1665.0 3073.0,1654.8 3081.7,1659.2 3105.0,1655.4 3113.7,1659.2 3139.9,1659.2 3166.0,1662.9 3183.5,1660.6 3224.2,1661.2 3253.3,1664.1 3273.6,1667.0 3349.2,1665.8 3357.9,1667.0 3417.5,1669.3"/>
<polyline fill="none" stroke="#b4b4b4" stroke-width="2.0" stroke-linejoin="round" points="650.0,1804.5 737.2,1804.5 850.6,1804.5 853.5,1794.3 870.9,1787.1 888.4,1787.1 905.8,1802.5 929.1,1787.1 946.5,1800.1 968.3,1787.1 984.3,1798.7 993.0,1779.8 1001.7,1790.0 1013.4,1785.6 1025.0,1771.1 1033.7,1791.4 1041.0,1771.1 1051.2,1779.8 1059.9,1781.2 1071.5,1768.7 1080.2,1779.8 1094.8,1778.3 1103.5,1760.9 1112.2,1775.4 1120.9,1758.0 1129.7,1774.6 1144.2,1755.1 1152.9,1766.7 1167.4,1752.2 1176.2,1750.7 1184.9,1763.8 1202.3,1756.5 1216.9,1740.5 1231.4,1736.2 1248.8,1726.9 1260.5,1739.1 1275.0,1733.3 1289.5,1712.9 1304.1,1708.6 1312.8,1720.2 1333.1,1692.6 1350.0,1675.1 1350.0,1672.2 1361.6,1675.1 1368.9,1689.7 1377.6,1670.8 1384.9,1673.7 1393.0,1652.5 1400.9,1682.4 1409.6,1651.3 1416.9,1650.4 1428.5,1682.4 1448.8,1644.6 1463.4,1640.3 1473.5,1637.3 1480.8,1654.8 1492.4,1646.1 1504.1,1644.6 1512.8,1625.7 1521.5,1625.7 1528.8,1646.1 1537.5,1622.8 1547.7,1624.3 1553.5,1628.6 1560.8,1646.1 1568.6,1619.9 1576.7,1631.5 1584.9,1608.3 1592.7,1614.1 1601.5,1633.0 1608.7,1604.8 1617.4,1631.5 1633.4,1608.9 1640.7,1635.0 1649.4,1624.3 1658.1,1600.1 1672.7,1594.3 1681.4,1625.1 1696.5,1599.0 1704.7,1612.6 1720.6,1618.5 1736.6,1606.8 1745.3,1608.3 1752.6,1614.7 1760.5,1590.8 1777.3,1589.4 1786.0,1599.0 1800.6,1585.0 1809.3,1591.4 1816.6,1586.5 1834.0,1594.3 1850.0,1587.9 1857.3,1589.4 1865.1,1596.7 1873.3,1585.0 1881.4,1601.9 1889.2,1602.5 1896.5,1582.7 1905.2,1582.1 1914.0,1574.8 1921.2,1579.2 1928.5,1572.8 1937.2,1583.6 1960.5,1594.3 1969.2,1585.0 1977.3,1594.3 1985.2,1556.5 2001.2,1583.6 2008.4,1565.3 2017.2,1570.5 2033.1,1571.9 2040.4,1564.1 2030.0,1573.4 2040.2,1563.2 2048.9,1589.4 2057.6,1557.4 2067.8,1563.2 2082.3,1585.0 2098.3,1619.9 2105.6,1651.9 2128.8,1704.2 2152.1,1753.6 2176.8,1773.4 2184.1,1763.8 2192.8,1758.0 2216.0,1724.6 2224.8,1726.0 2233.5,1712.9 2248.0,1683.9 2256.7,1682.4 2265.5,1670.8 2274.2,1644.6 2288.7,1617.6 2297.4,1616.4 2312.0,1599.0 2320.7,1627.2 2329.4,1623.4 2336.7,1624.3 2345.4,1633.0 2352.7,1628.6 2375.9,1626.3 2384.7,1622.8 2393.4,1617.0 2400.6,1617.0 2407.9,1607.7 2416.6,1610.6 2432.6,1597.2 2448.6,1617.0 2456.7,1617.0 2464.6,1598.1 2472.4,1591.4 2480.6,1601.0 2488.7,1601.0 2496.6,1592.3 2504.4,1591.4 2521.3,1596.1 2528.5,1604.8 2537.3,1595.2 2545.1,1595.2 2553.3,1585.6 2569.2,1592.3 2577.1,1601.0 2585.2,1595.2 2593.4,1601.0 2601.2,1585.6 2609.1,1589.4 2617.2,1585.6 2625.3,1592.3 2633.2,1587.3 2649.2,1591.4 2665.2,1594.3 2673.0,1580.7 2681.2,1599.0 2689.3,1579.2 2697.2,1592.3 2704.4,1582.1 2713.1,1595.2 2720.4,1586.5 2730.0,1576.3 2735.8,1571.1 2744.5,1586.5 2753.3,1576.3 2761.4,1592.3 2769.2,1577.8 2778.0,1584.4 2785.2,1581.5 2801.2,1580.7 2809.1,1571.1 2817.2,1601.0 2824.5,1577.8 2834.7,1587.3 2849.2,1593.7 2863.7,1631.5 2881.2,1678.0 2904.4,1724.6 2921.9,1753.6 2942.2,1776.9 2962.6,1794.3 2980.0,1800.1 2991.6,1804.5 2997.4,1808.3 3009.1,1810.3 3020.7,1804.5 3032.3,1804.5 3041.6,1814.1 3049.8,1806.0 3065.8,1814.7 3073.0,1806.0 3081.7,1814.1 3089.0,1814.1 3097.7,1806.0 3105.0,1816.1 3113.7,1806.0 3121.0,1810.3 3129.7,1814.1 3137.0,1791.4 3145.7,1814.1 3160.2,1798.7 3169.0,1814.1 3176.2,1806.0 3184.9,1814.1 3192.2,1806.0 3200.9,1814.1 3209.7,1806.0 3216.9,1814.1 3225.6,1806.0 3232.9,1819.0 3241.6,1806.0 3257.6,1810.3 3264.9,1820.5 3273.6,1806.0 3280.9,1814.1 3289.6,1806.0 3296.9,1814.1 3305.6,1806.0 3312.8,1819.0 3321.6,1806.0 3328.8,1814.1 3337.6,1806.0 3344.8,1814.1 3353.5,1810.3 3360.8,1806.0 3369.5,1814.1 3376.8,1806.0 3385.5,1823.4 3392.8,1814.1 3401.5,1816.1 3408.8,1806.0 3417.5,1804.5"/>
<polyline fill="none" stroke="#00e8f0" stroke-width="2.0" stroke-linejoin="round" points="650.0,1808.9 737.2,1806.0 853.5,1803.0 870.9,1800.1 882.6,1795.8 911.6,1795.8 940.7,1795.8 969.8,1800.1 998.8,1794.3 1027.9,1790.0 1057.0,1784.2 1086.0,1779.8 1115.1,1775.4 1144.2,1774.0 1173.3,1756.5 1202.3,1753.0 1231.4,1747.8 1260.5,1736.2 1289.5,1724.6 1318.6,1715.3 1350.0,1692.6 1350.0,1696.9 1361.6,1687.3 1377.6,1696.9 1393.6,1696.1 1401.7,1692.6 1417.4,1702.8 1425.6,1699.0 1441.6,1695.5 1451.7,1699.0 1457.6,1699.0 1464.8,1692.6 1473.5,1699.0 1480.8,1692.6 1496.8,1689.7 1521.5,1689.7 1528.8,1688.2 1536.6,1695.5 1544.8,1689.7 1560.8,1687.3 1568.6,1690.3 1576.7,1685.3 1592.7,1688.2 1608.7,1686.8 1617.4,1692.6 1624.7,1689.7 1640.7,1689.7 1656.7,1687.3 1672.7,1692.6 1681.4,1689.1 1696.5,1696.9 1711.9,1686.2 1727.9,1686.2 1736.6,1682.4 1744.8,1692.6 1752.6,1686.8 1760.5,1692.6 1777.3,1687.3 1792.4,1683.3 1808.7,1691.1 1824.4,1689.1 1832.6,1691.1 1848.5,1685.3 1873.3,1695.5 1881.4,1691.1 1905.2,1691.1 1921.2,1685.3 1937.2,1691.1 1953.2,1692.6 1969.2,1688.2 1977.3,1682.4 1992.4,1692.6 2024.4,1692.6 2040.4,1687.3 2030.0,1691.1 2041.6,1687.3 2048.9,1685.3 2057.6,1692.6 2073.6,1679.5 2081.7,1663.5 2089.6,1695.5 2097.4,1726.9 2105.6,1707.1 2113.7,1744.9 2121.6,1736.2 2128.8,1744.9 2160.8,1779.8 2169.5,1798.7 2176.8,1803.6 2192.8,1794.3 2208.8,1779.8 2233.5,1755.1 2256.7,1727.5 2280.0,1696.9 2291.6,1683.9 2304.7,1681.5 2312.6,1687.3 2320.7,1691.1 2336.7,1700.7 2344.5,1691.1 2352.7,1701.9 2368.7,1705.7 2376.5,1711.5 2384.7,1705.7 2392.8,1706.5 2408.5,1699.0 2416.6,1692.6 2424.8,1695.5 2432.6,1692.6 2448.6,1689.1 2457.3,1687.3 2464.6,1696.9 2472.4,1687.3 2480.6,1685.3 2488.7,1694.9 2496.6,1687.3 2504.4,1692.6 2520.7,1691.1 2545.1,1687.3 2561.4,1691.1 2585.2,1689.7 2601.2,1685.3 2609.1,1691.1 2617.2,1687.3 2625.3,1692.6 2641.0,1688.2 2657.3,1689.7 2665.2,1687.3 2681.2,1691.1 2697.2,1692.6 2713.1,1685.3 2730.0,1685.3 2736.4,1691.1 2744.5,1689.1 2761.4,1694.9 2769.2,1691.1 2785.2,1692.6 2794.0,1689.1 2802.7,1691.1 2817.2,1689.1 2831.7,1689.7 2840.5,1683.9 2849.2,1650.4 2856.5,1720.2 2865.2,1734.7 2872.4,1701.3 2881.2,1759.4 2888.4,1733.3 2897.2,1749.3 2919.0,1768.2 2939.3,1781.2 2962.6,1790.0 2991.6,1795.8 3020.7,1800.1 3049.8,1803.6 3107.9,1806.0 3166.0,1807.4 3224.2,1808.9 3311.4,1808.9 3417.5,1810.3"/>
<polyline fill="none" stroke="#eeee22" stroke-width="2.0" stroke-linejoin="round" points="650.0,1807.4 737.2,1803.0 853.5,1800.7 882.6,1797.2 911.6,1796.7 940.7,1797.2 969.8,1802.5 984.3,1794.9 998.8,1790.0 1013.4,1792.9 1027.9,1788.5 1036.6,1782.7 1051.2,1785.6 1062.8,1778.3 1074.4,1782.7 1083.1,1774.0 1094.8,1781.2 1103.5,1771.7 1115.1,1778.3 1129.7,1771.1 1144.2,1774.0 1152.9,1762.3 1167.4,1760.9 1176.2,1768.2 1193.6,1753.6 1208.1,1747.8 1216.9,1752.2 1228.5,1740.5 1243.0,1749.3 1257.6,1731.0 1275.0,1734.7 1295.3,1712.9 1307.0,1721.7 1321.5,1696.9 1333.1,1704.2 1350.0,1683.9 1350.0,1683.9 1361.6,1681.0 1368.9,1686.2 1377.6,1678.0 1386.3,1675.1 1393.6,1664.1 1401.7,1682.4 1409.6,1679.5 1418.3,1670.8 1425.6,1678.0 1434.3,1687.3 1448.8,1658.3 1457.6,1657.1 1466.3,1663.5 1472.1,1660.6 1480.8,1672.2 1496.8,1684.4 1504.1,1681.0 1512.8,1663.5 1521.5,1654.8 1528.8,1678.0 1544.8,1650.4 1560.8,1676.6 1568.6,1660.6 1576.7,1672.2 1584.9,1652.5 1592.7,1673.7 1608.7,1649.0 1617.4,1675.7 1633.4,1660.6 1640.7,1669.9 1649.4,1670.8 1665.4,1658.3 1672.7,1657.1 1681.4,1675.7 1688.7,1679.5 1704.7,1668.7 1712.8,1675.1 1720.6,1663.5 1728.5,1663.5 1736.6,1669.9 1744.8,1662.9 1752.6,1668.7 1760.5,1661.2 1768.6,1669.9 1777.3,1671.7 1784.6,1666.4 1792.4,1655.4 1800.6,1667.9 1808.7,1657.1 1816.6,1678.6 1824.4,1659.2 1832.6,1678.0 1840.7,1657.1 1848.5,1672.8 1856.4,1652.5 1864.5,1662.1 1873.3,1666.4 1882.0,1663.5 1889.2,1665.0 1896.5,1684.4 1905.2,1681.0 1913.1,1657.1 1921.2,1661.2 1929.1,1653.3 1937.2,1678.6 1945.3,1685.3 1960.5,1650.4 1969.2,1653.3 1976.5,1671.7 1985.2,1657.1 1993.0,1659.2 2001.2,1664.1 2009.3,1661.2 2017.2,1668.7 2024.4,1666.4 2033.1,1670.8 2040.4,1679.5 2030.0,1668.7 2041.6,1678.0 2048.9,1646.7 2057.6,1659.2 2073.6,1651.3 2081.7,1623.4 2089.6,1682.4 2097.4,1732.7 2105.6,1683.3 2113.7,1750.1 2121.6,1728.9 2128.8,1742.0 2160.8,1776.9 2169.5,1800.1 2176.8,1802.5 2192.8,1791.4 2208.8,1778.3 2216.6,1762.9 2224.8,1766.7 2233.5,1748.4 2248.6,1724.6 2256.7,1724.6 2264.9,1715.8 2280.0,1675.1 2288.7,1673.7 2296.9,1672.8 2304.7,1663.5 2312.6,1657.1 2320.7,1663.5 2332.3,1678.0 2344.5,1681.0 2361.4,1686.8 2376.5,1685.3 2392.8,1686.8 2408.5,1681.0 2424.8,1669.9 2432.6,1657.1 2440.5,1664.1 2448.6,1662.9 2464.6,1664.1 2472.4,1673.7 2480.6,1669.9 2488.7,1657.1 2496.6,1657.1 2504.4,1678.6 2520.7,1675.1 2528.5,1661.2 2537.3,1659.2 2545.1,1665.0 2553.3,1644.6 2561.4,1669.3 2569.2,1672.2 2577.1,1657.1 2585.2,1678.0 2593.4,1678.0 2601.2,1657.1 2609.1,1670.8 2617.2,1657.1 2625.3,1666.4 2641.0,1667.9 2649.2,1682.4 2657.3,1657.1 2665.2,1669.3 2673.0,1663.5 2681.2,1676.6 2689.3,1647.5 2697.2,1673.7 2704.4,1664.1 2713.1,1664.1 2720.4,1676.6 2730.0,1659.2 2736.4,1647.5 2744.5,1673.7 2761.4,1649.0 2769.2,1677.5 2777.1,1652.5 2784.7,1676.6 2794.0,1662.1 2802.7,1660.0 2817.2,1667.0 2824.5,1660.6 2833.2,1676.6 2840.5,1653.3 2849.2,1597.2 2856.5,1718.7 2865.2,1724.6 2872.4,1683.9 2881.2,1760.9 2888.4,1731.0 2897.2,1749.3 2913.1,1763.8 2933.5,1778.3 2950.9,1785.6 2977.1,1794.3 3006.2,1798.7 3049.8,1803.0 3107.9,1806.0 3195.1,1808.9 3417.5,1811.2"/>
</g>
<rect x="2040" y="189" width="2.2" height="1778" fill="#00e6f6"/>
<rect x="648.5" y="1946" width="3" height="21" fill="#00f0f0"/>
<rect x="880.5" y="1957" width="2" height="10" fill="#00f0f0"/>
<rect x="1112.0" y="1957" width="2" height="10" fill="#00f0f0"/>
<rect x="1343.0" y="1946" width="3" height="21" fill="#00f0f0"/>
<rect x="1575.0" y="1957" width="2" height="10" fill="#00f0f0"/>
<rect x="1806.5" y="1957" width="2" height="10" fill="#00f0f0"/>
<rect x="2037.5" y="1946" width="3" height="21" fill="#00f0f0"/>
<rect x="2269.5" y="1957" width="2" height="10" fill="#00f0f0"/>
<rect x="2501.0" y="1957" width="2" height="10" fill="#00f0f0"/>
<rect x="2732.0" y="1946" width="3" height="21" fill="#00f0f0"/>
<rect x="2964.0" y="1957" width="2" height="10" fill="#00f0f0"/>
<rect x="3195.5" y="1957" width="2" height="10" fill="#00f0f0"/>
<rect x="3426.5" y="1946" width="3" height="21" fill="#00f0f0"/>
</svg>
<div class="t" style="top:191.3px;color:#ffffff;font-size:24px;font-weight:700;letter-spacing:1.4px;left:659px;background:#000;">Max = 7000.0 (RPM)</div>
<div class="t" style="top:215.3px;color:#ff2a1a;font-size:24px;font-weight:700;letter-spacing:1.4px;left:659px;background:#000;">Max = 400.0 (kPa)</div>
<div class="t" style="top:239.3px;color:#00f02a;font-size:24px;font-weight:700;letter-spacing:1.4px;left:659px;background:#000;">Max = 35.1 (deg)</div>
<div class="t" style="top:263.3px;color:#ffff33;font-size:24px;font-weight:700;letter-spacing:1.4px;left:659px;background:#000;">Max = 18.0 (AFR)</div>
<div class="t" style="top:287.3px;color:#ffffff;font-size:24px;font-weight:700;letter-spacing:1.4px;left:659px;background:#000;">Max = 59.2 (%)</div>
<div class="t" style="top:494.9px;color:#ffffff;font-size:24px;font-weight:700;letter-spacing:1.4px;left:659px;background:#000;">Min = 0.0 (%)</div>
<div class="t" style="top:518.9px;color:#ffff33;font-size:24px;font-weight:700;letter-spacing:1.4px;left:659px;background:#000;">Min = 8.0 (AFR)</div>
<div class="t" style="top:542.9px;color:#00f02a;font-size:24px;font-weight:700;letter-spacing:1.4px;left:659px;background:#000;">Min = 2.8 (deg)</div>
<div class="t" style="top:566.9px;color:#ff2a1a;font-size:24px;font-weight:700;letter-spacing:1.4px;left:659px;background:#000;">Min = 0.0 (kPa)</div>
<div class="t" style="top:590.9px;color:#ffffff;font-size:24px;font-weight:700;letter-spacing:1.4px;left:659px;background:#000;">Min = 0.0 (RPM)</div>
<div class="t" style="top:191.3px;color:#ffffff;font-size:24px;font-weight:700;letter-spacing:0.9px;left:3251px;background:#000;">RPM</div>
<div class="t" style="top:215.3px;color:#ff2a1a;font-size:24px;font-weight:700;letter-spacing:0.9px;left:3251px;background:#000;">MAP</div>
<div class="t" style="top:239.3px;color:#00f02a;font-size:24px;font-weight:700;letter-spacing:0.3px;right:167px;background:#000;">SPK: Spark Advance</div>
<div class="t" style="top:263.3px;color:#ffff33;font-size:24px;font-weight:700;letter-spacing:0.9px;left:3251px;background:#000;">AFR</div>
<div class="t" style="top:287.3px;color:#ffffff;font-size:24px;font-weight:700;letter-spacing:0.9px;left:3251px;background:#000;">Duty Cycle1</div>
<div class="t" style="top:384.6px;color:#c8c8c8;font-size:20px;font-weight:400;letter-spacing:0px;left:655.8px;background:#000;-webkit-text-stroke:0.35px #c8c8c8;">50%</div>
<div class="t" style="top:384.6px;color:#ffffff;font-size:20px;font-weight:400;letter-spacing:0.4px;left:705.2px;background:#000;-webkit-text-stroke:0.35px #ffffff;">3500.0</div>
<div class="t" style="top:384.6px;color:#ff2a1a;font-size:20px;font-weight:400;letter-spacing:0.4px;left:775px;background:#000;-webkit-text-stroke:0.35px #ff2a1a;">200.0</div>
<div class="t" style="top:384.6px;color:#00f02a;font-size:20px;font-weight:400;letter-spacing:0.4px;left:846.2px;background:#000;-webkit-text-stroke:0.35px #00f02a;">18.949</div>
<div class="t" style="top:384.6px;color:#ffff33;font-size:20px;font-weight:400;letter-spacing:0.4px;left:916px;background:#000;-webkit-text-stroke:0.35px #ffff33;">13.0</div>
<div class="t" style="top:384.6px;color:#ffffff;font-size:20px;font-weight:400;letter-spacing:0.4px;left:984.3px;background:#000;-webkit-text-stroke:0.35px #ffffff;">29.6</div>
<div class="t" style="top:494.9px;color:#ffffff;font-size:24px;font-weight:400;letter-spacing:2.0px;left:2047.4px;background:#000;-webkit-text-stroke:0.35px #ffffff;">58.2</div>
<div class="t" style="top:518.9px;color:#ffff33;font-size:24px;font-weight:400;letter-spacing:2.0px;left:2047.4px;background:#000;-webkit-text-stroke:0.35px #ffff33;">11.1</div>
<div class="t" style="top:542.9px;color:#00f02a;font-size:24px;font-weight:400;letter-spacing:2.0px;left:2047.4px;background:#000;-webkit-text-stroke:0.35px #00f02a;">15.4</div>
<div class="t" style="top:566.9px;color:#ff2a1a;font-size:24px;font-weight:400;letter-spacing:2.0px;left:2047.4px;background:#000;-webkit-text-stroke:0.35px #ff2a1a;">226.3</div>
<div class="t" style="top:590.9px;color:#ffffff;font-size:24px;font-weight:400;letter-spacing:2.0px;left:2047.4px;background:#000;-webkit-text-stroke:0.35px #ffffff;">6917.0</div>
<div class="t" style="top:625.8px;color:#00f02a;font-size:24px;font-weight:700;letter-spacing:1.4px;left:659px;background:#000;">Max = 11.173 (ms)</div>
<div class="t" style="top:649.8px;color:#ffff33;font-size:24px;font-weight:700;letter-spacing:1.4px;left:659px;background:#000;">Max = 250.0 (%)</div>
<div class="t" style="top:673.8px;color:#ffffff;font-size:24px;font-weight:700;letter-spacing:1.4px;left:659px;background:#000;">Max = 70.0 (%)</div>
<div class="t" style="top:697.8px;color:#ff2a1a;font-size:24px;font-weight:700;letter-spacing:1.4px;left:659px;background:#000;">Max = 100.1 (%)</div>
<div class="t" style="top:721.8px;color:#00f02a;font-size:24px;font-weight:700;letter-spacing:1.4px;left:659px;background:#000;">Max = 400.0 (kPa)</div>
<div class="t" style="top:929.4px;color:#00f02a;font-size:24px;font-weight:700;letter-spacing:1.4px;left:659px;background:#000;">Min = 0.0 (kPa)</div>
<div class="t" style="top:953.4px;color:#ff2a1a;font-size:24px;font-weight:700;letter-spacing:1.4px;left:659px;background:#000;">Min = -0.5 (%)</div>
<div class="t" style="top:977.4px;color:#ffffff;font-size:24px;font-weight:700;letter-spacing:1.4px;left:659px;background:#000;">Min = 10.0 (%)</div>
<div class="t" style="top:1001.4px;color:#ffff33;font-size:24px;font-weight:700;letter-spacing:1.4px;left:659px;background:#000;">Min = 0.0 (%)</div>
<div class="t" style="top:1025.4px;color:#00f02a;font-size:24px;font-weight:700;letter-spacing:1.4px;left:659px;background:#000;">Min = 0.0 (ms)</div>
<div class="t" style="top:625.8px;color:#00f02a;font-size:24px;font-weight:700;letter-spacing:0.9px;left:3251px;background:#000;">PW</div>
<div class="t" style="top:649.8px;color:#ffff33;font-size:24px;font-weight:700;letter-spacing:1.1px;right:163px;background:#000;">Boost target 1</div>
<div class="t" style="top:673.8px;color:#ffffff;font-size:24px;font-weight:700;letter-spacing:0.9px;left:3251px;background:#000;">Boost duty</div>
<div class="t" style="top:697.8px;color:#ff2a1a;font-size:24px;font-weight:700;letter-spacing:0.9px;left:3251px;background:#000;">TPS</div>
<div class="t" style="top:721.8px;color:#00f02a;font-size:24px;font-weight:700;letter-spacing:0.9px;left:3251px;background:#000;">MAP</div>
<div class="t" style="top:819.1px;color:#c8c8c8;font-size:20px;font-weight:400;letter-spacing:0px;left:655.8px;background:#000;-webkit-text-stroke:0.35px #c8c8c8;">50%</div>
<div class="t" style="top:819.1px;color:#00f02a;font-size:20px;font-weight:400;letter-spacing:0.4px;left:705.2px;background:#000;-webkit-text-stroke:0.35px #00f02a;">5.586</div>
<div class="t" style="top:819.1px;color:#ffff33;font-size:20px;font-weight:400;letter-spacing:0.4px;left:775px;background:#000;-webkit-text-stroke:0.35px #ffff33;">125.0</div>
<div class="t" style="top:819.1px;color:#ffffff;font-size:20px;font-weight:400;letter-spacing:0.4px;left:843.3px;background:#000;-webkit-text-stroke:0.35px #ffffff;">40.0</div>
<div class="t" style="top:819.1px;color:#ff2a1a;font-size:20px;font-weight:400;letter-spacing:0.4px;left:913px;background:#000;-webkit-text-stroke:0.35px #ff2a1a;">49.8</div>
<div class="t" style="top:819.1px;color:#00f02a;font-size:20px;font-weight:400;letter-spacing:0.4px;left:984.3px;background:#000;-webkit-text-stroke:0.35px #00f02a;">200.0</div>
<div class="t" style="top:929.4px;color:#00f02a;font-size:24px;font-weight:400;letter-spacing:2.0px;left:2047.4px;background:#000;-webkit-text-stroke:0.35px #00f02a;">226.3</div>
<div class="t" style="top:953.4px;color:#ff2a1a;font-size:24px;font-weight:400;letter-spacing:2.0px;left:2047.4px;background:#000;-webkit-text-stroke:0.35px #ff2a1a;">99.9</div>
<div class="t" style="top:977.4px;color:#ffffff;font-size:24px;font-weight:400;letter-spacing:2.0px;left:2047.4px;background:#000;-webkit-text-stroke:0.35px #ffffff;">40.0</div>
<div class="t" style="top:1001.4px;color:#ffff33;font-size:24px;font-weight:400;letter-spacing:2.0px;left:2047.4px;background:#000;-webkit-text-stroke:0.35px #ffff33;">230.0</div>
<div class="t" style="top:1025.4px;color:#00f02a;font-size:24px;font-weight:400;letter-spacing:2.0px;left:2047.4px;background:#000;-webkit-text-stroke:0.35px #00f02a;">10.099</div>
<div class="t" style="top:1060.3px;color:#ff2a1a;font-size:24px;font-weight:700;letter-spacing:1.4px;left:659px;background:#000;">Max = 50.0 (kPa)</div>
<div class="t" style="top:1459.9px;color:#ff2a1a;font-size:24px;font-weight:700;letter-spacing:1.4px;left:659px;background:#000;">Min = 0.0 (kPa)</div>
<div class="t" style="top:1060.3px;color:#ff2a1a;font-size:24px;font-weight:700;letter-spacing:0.9px;left:3251px;background:#000;">IC Drop2</div>
<div class="t" style="top:1253.6px;color:#c8c8c8;font-size:20px;font-weight:400;letter-spacing:0px;left:655.8px;background:#000;-webkit-text-stroke:0.35px #c8c8c8;">50%</div>
<div class="t" style="top:1253.6px;color:#ff2a1a;font-size:20px;font-weight:400;letter-spacing:0.4px;left:705.2px;background:#000;-webkit-text-stroke:0.35px #ff2a1a;">25.0</div>
<div class="t" style="top:1459.9px;color:#ff2a1a;font-size:24px;font-weight:400;letter-spacing:2.0px;left:2047.4px;background:#000;-webkit-text-stroke:0.35px #ff2a1a;">-1.591</div>
<div class="t" style="top:1494.6px;color:#ffb8a8;font-size:24px;font-weight:700;letter-spacing:1.4px;left:659px;background:#000;">Max = 400.0 (kPa)</div>
<div class="t" style="top:1518.6px;color:#c4c4c4;font-size:24px;font-weight:700;letter-spacing:1.4px;left:659px;background:#000;">Max = 400.0 (kPa)</div>
<div class="t" style="top:1542.6px;color:#00f0f0;font-size:24px;font-weight:700;letter-spacing:1.4px;left:659px;background:#000;">Max = 400.0 (kPa)</div>
<div class="t" style="top:1566.6px;color:#ffff33;font-size:24px;font-weight:700;letter-spacing:1.4px;left:659px;background:#000;">Max = 400.0 (kPa)</div>
<div class="t" style="top:1590.6px;color:#ff48ff;font-size:24px;font-weight:700;letter-spacing:1.4px;left:659px;background:#000;">Max = 7000.0 (RPM)</div>
<div class="t" style="top:1798.2px;color:#ff48ff;font-size:24px;font-weight:700;letter-spacing:1.4px;left:659px;background:#000;">Min = 0.0 (RPM)</div>
<div class="t" style="top:1822.2px;color:#ffff33;font-size:24px;font-weight:700;letter-spacing:1.4px;left:659px;background:#000;">Min = 0.0 (kPa)</div>
<div class="t" style="top:1846.2px;color:#00f0f0;font-size:24px;font-weight:700;letter-spacing:1.4px;left:659px;background:#000;">Min = 0.0 (kPa)</div>
<div class="t" style="top:1870.2px;color:#c4c4c4;font-size:24px;font-weight:700;letter-spacing:1.4px;left:659px;background:#000;">Min = 0.0 (kPa)</div>
<div class="t" style="top:1894.2px;color:#ffb8a8;font-size:24px;font-weight:700;letter-spacing:1.4px;left:659px;background:#000;">Min = 0.0 (kPa)</div>
<div class="t" style="top:1494.6px;color:#ffb8a8;font-size:24px;font-weight:700;letter-spacing:0.9px;left:3251px;background:#000;">MAP</div>
<div class="t" style="top:1518.6px;color:#c4c4c4;font-size:24px;font-weight:700;letter-spacing:0.9px;left:3251px;background:#000;">TIP</div>
<div class="t" style="top:1542.6px;color:#00f0f0;font-size:24px;font-weight:700;letter-spacing:0.9px;left:3251px;background:#000;">Post IC Pres</div>
<div class="t" style="top:1566.6px;color:#ffff33;font-size:24px;font-weight:700;letter-spacing:0.9px;left:3251px;background:#000;">COP</div>
<div class="t" style="top:1590.6px;color:#ff48ff;font-size:24px;font-weight:700;letter-spacing:0.9px;left:3251px;background:#000;">RPM</div>
<div class="t" style="top:1687.9px;color:#c8c8c8;font-size:20px;font-weight:400;letter-spacing:0px;left:655.8px;background:#000;-webkit-text-stroke:0.35px #c8c8c8;">50%</div>
<div class="t" style="top:1687.9px;color:#ffb8a8;font-size:20px;font-weight:400;letter-spacing:0.4px;left:705.2px;background:#000;-webkit-text-stroke:0.35px #ffb8a8;">200.0</div>
<div class="t" style="top:1687.9px;color:#c4c4c4;font-size:20px;font-weight:400;letter-spacing:0.4px;left:775px;background:#000;-webkit-text-stroke:0.35px #c4c4c4;">200.0</div>
<div class="t" style="top:1687.9px;color:#00f0f0;font-size:20px;font-weight:400;letter-spacing:0.4px;left:846px;background:#000;-webkit-text-stroke:0.35px #00f0f0;">200.0</div>
<div class="t" style="top:1687.9px;color:#ffff33;font-size:20px;font-weight:400;letter-spacing:0.4px;left:916px;background:#000;-webkit-text-stroke:0.35px #ffff33;">200.0</div>
<div class="t" style="top:1687.9px;color:#ff48ff;font-size:20px;font-weight:400;letter-spacing:0.4px;left:985.8px;background:#000;-webkit-text-stroke:0.35px #ff48ff;">3500.0</div>
<div class="t" style="top:1798.2px;color:#ff48ff;font-size:24px;font-weight:400;letter-spacing:2.0px;left:2047.4px;background:#000;-webkit-text-stroke:0.35px #ff48ff;">6917.0</div>
<div class="t" style="top:1822.2px;color:#ffff33;font-size:24px;font-weight:400;letter-spacing:2.0px;left:2047.4px;background:#000;-webkit-text-stroke:0.35px #ffff33;">224.708</div>
<div class="t" style="top:1846.2px;color:#00f0f0;font-size:24px;font-weight:400;letter-spacing:2.0px;left:2047.4px;background:#000;-webkit-text-stroke:0.35px #00f0f0;">219.293</div>
<div class="t" style="top:1870.2px;color:#c4c4c4;font-size:24px;font-weight:400;letter-spacing:2.0px;left:2047.4px;background:#000;-webkit-text-stroke:0.35px #c4c4c4;">333.022</div>
<div class="t" style="top:1894.2px;color:#ffb8a8;font-size:24px;font-weight:400;letter-spacing:2.0px;left:2047.4px;background:#000;-webkit-text-stroke:0.35px #ffb8a8;">226.3</div>
<div class="t" style="top:1931.2px;color:#00f0f0;font-size:24px;font-weight:700;letter-spacing:2.1px;left:654.5px;">13553.266s.</div>
<div class="t" style="top:1931.2px;color:#00f0f0;font-size:24px;font-weight:700;letter-spacing:2.1px;left:2047.6px;">13559.171</div>
<div class="t" style="top:1931.2px;color:#00f0f0;font-size:24px;font-weight:700;letter-spacing:2.1px;right:167px;">13565.050s.</div>
</body></html>
